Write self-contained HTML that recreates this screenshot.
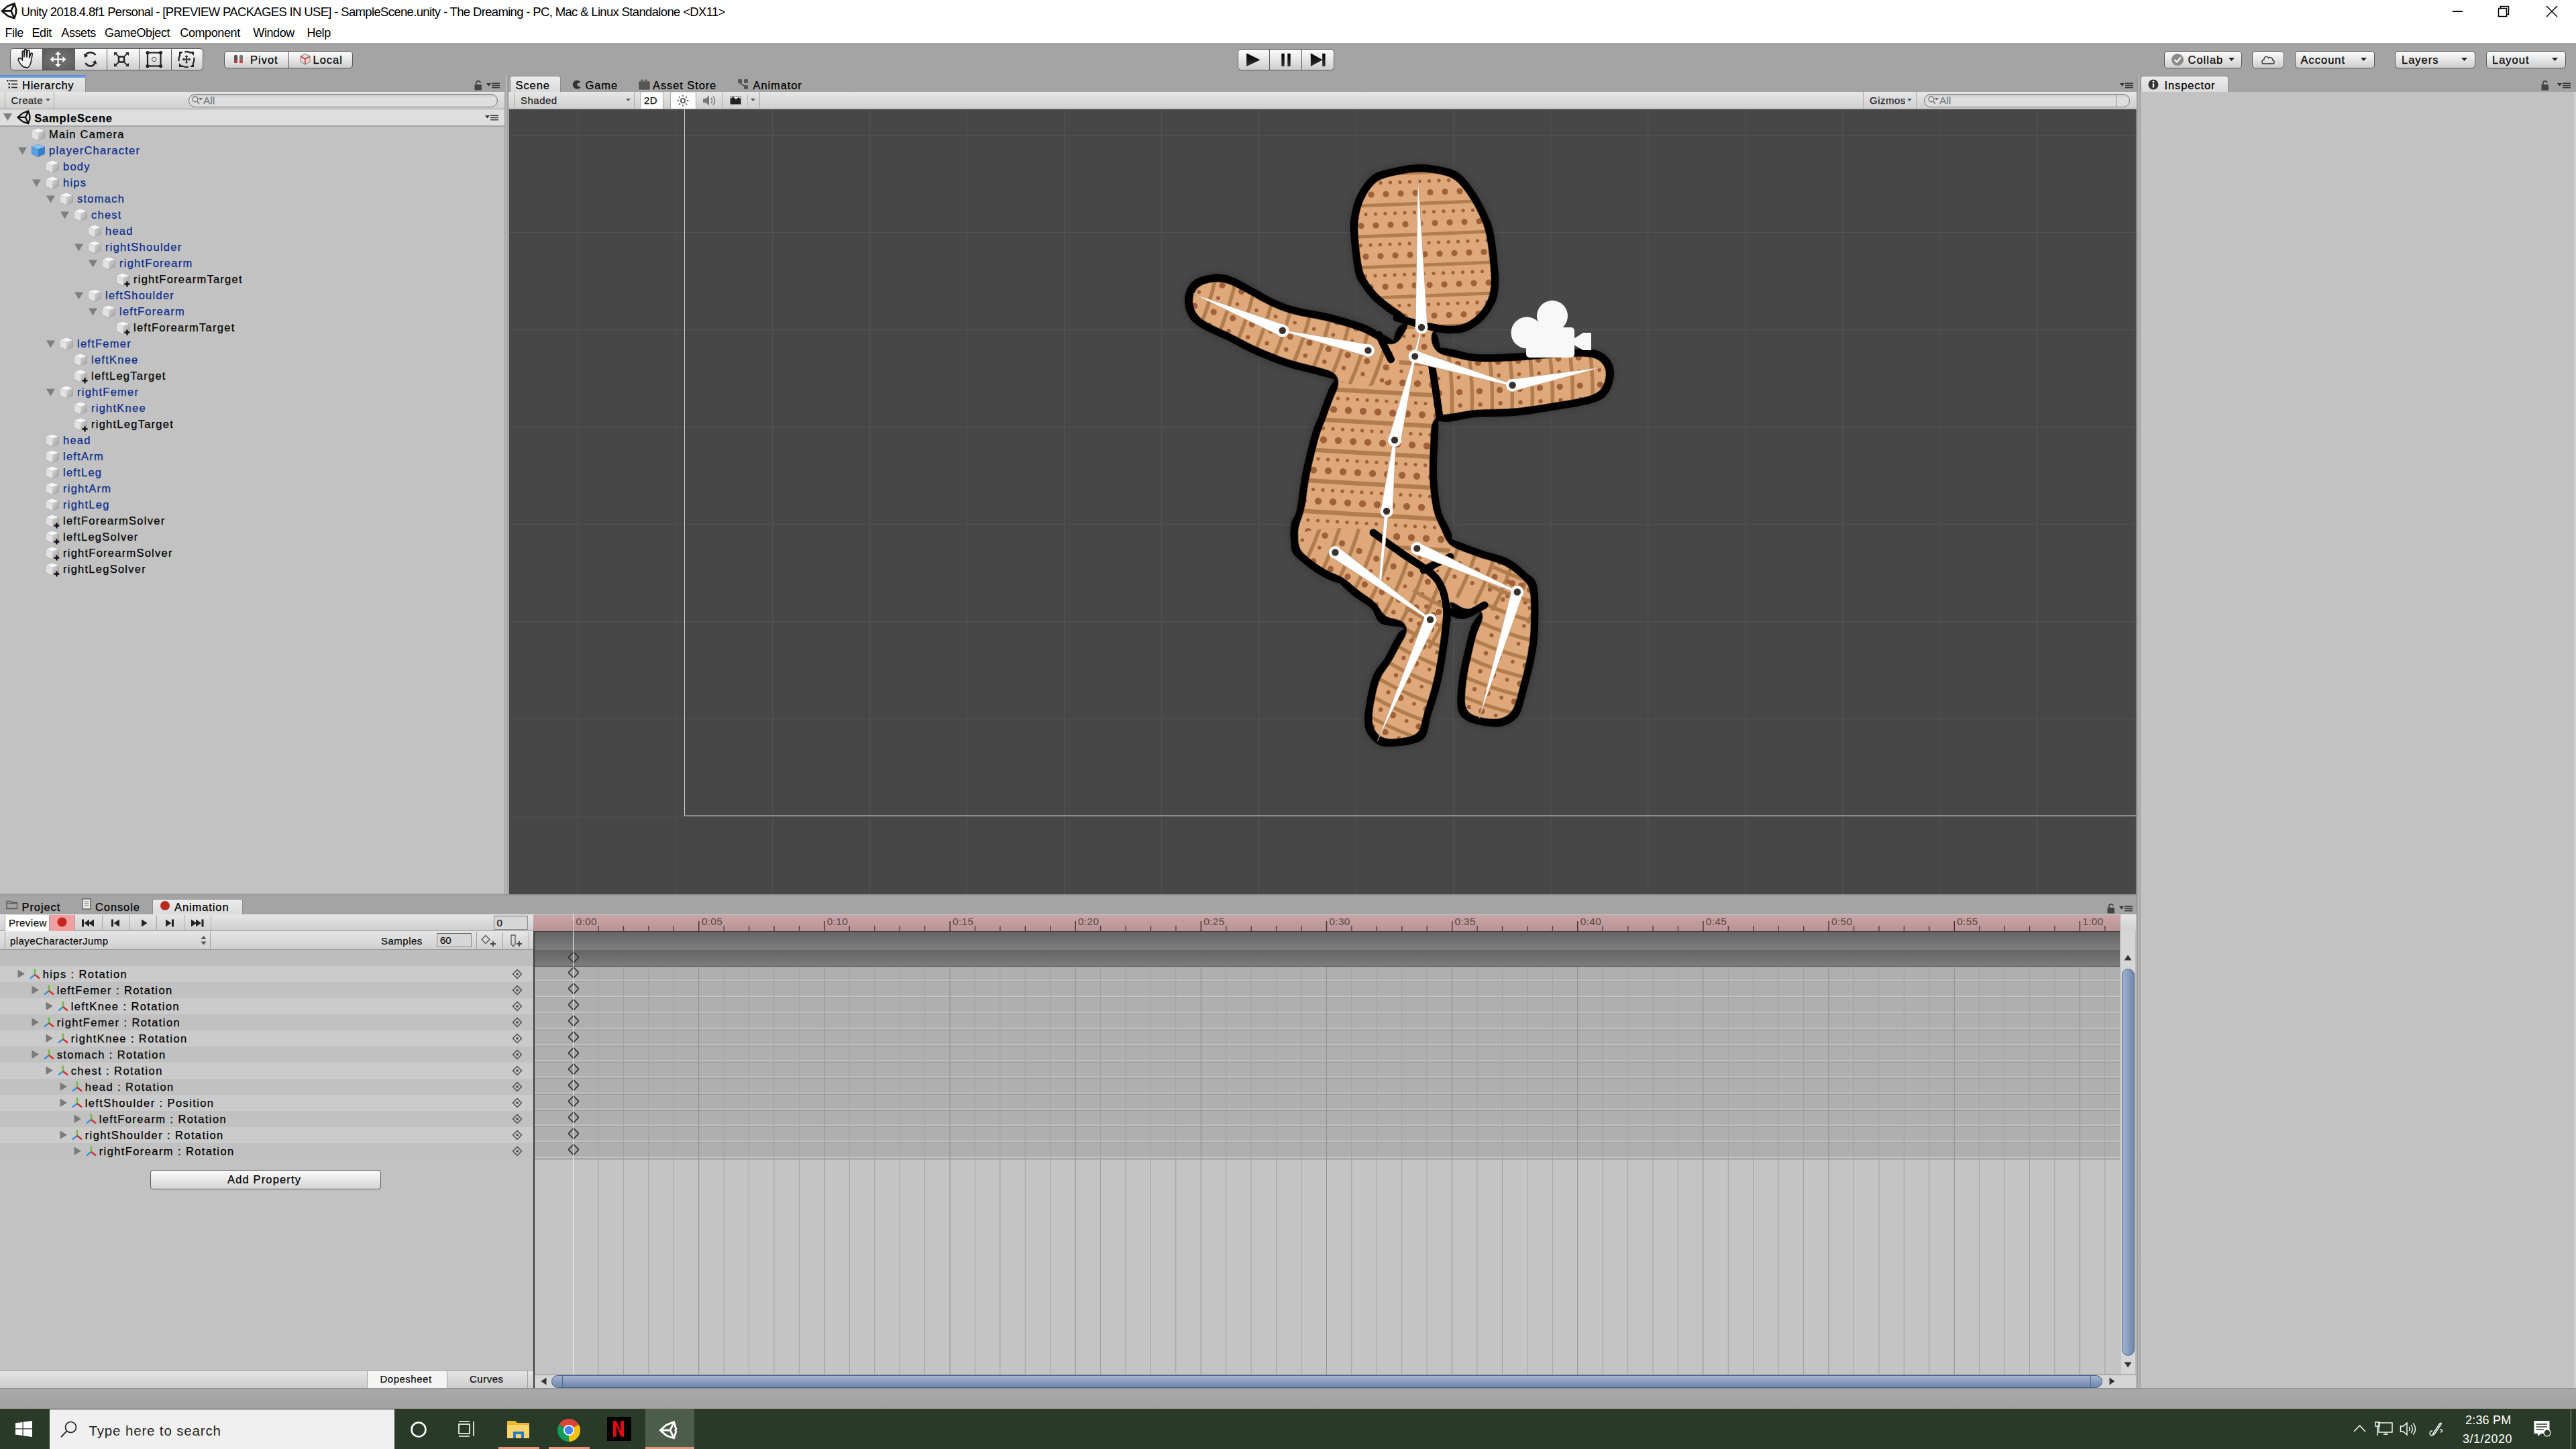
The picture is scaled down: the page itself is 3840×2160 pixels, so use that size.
<!DOCTYPE html><html><head><meta charset="utf-8"><style>
*{margin:0;padding:0;box-sizing:border-box}
html,body{width:3840px;height:2160px;overflow:hidden;background:#c2c2c2;font-family:"Liberation Sans",sans-serif}
body>div,body>svg{position:absolute}
.t{white-space:pre;color:#000;-webkit-text-stroke:0.25px currentColor}
</style></head><body><div style="left:0px;top:0px;width:3840px;height:64px;background:#fff"></div>
<svg style="left:0px;top:0px" width="28.0" height="32.0" viewBox="0 0 28 32"><path d="M3 16.4 L10.5 9.8 L13.5 8.3 L21.4 5.2 L24.3 14.6 L23.4 16.4 L24.3 18.3 L21.4 27.1 L13.5 24.6 L10.5 23 Z M3.5 16.4 H16.4 L21.4 5.6 M16.4 16.4 L21.4 26.7" fill="none" stroke="#111" stroke-width="2.6" stroke-linejoin="miter"/></svg>
<div class="t" style="left:31.5px;top:3.0px;font-size:18.5px;line-height:29px;letter-spacing:-0.66px;color:#000;-webkit-text-stroke:0">Unity 2018.4.8f1 Personal - [PREVIEW PACKAGES IN USE] - SampleScene.unity - The Dreaming - PC, Mac &amp; Linux Standalone &lt;DX11&gt;</div>
<div class="t" style="left:7.5px;top:35.4px;font-size:18px;line-height:28px;letter-spacing:-0.4px;color:#000;-webkit-text-stroke:0">File</div>
<div class="t" style="left:47.5px;top:35.4px;font-size:18px;line-height:28px;letter-spacing:-0.4px;color:#000;-webkit-text-stroke:0">Edit</div>
<div class="t" style="left:91.3px;top:35.4px;font-size:18px;line-height:28px;letter-spacing:-0.4px;color:#000;-webkit-text-stroke:0">Assets</div>
<div class="t" style="left:156.1px;top:35.4px;font-size:18px;line-height:28px;letter-spacing:-0.4px;color:#000;-webkit-text-stroke:0">GameObject</div>
<div class="t" style="left:268.3px;top:35.4px;font-size:18px;line-height:28px;letter-spacing:-0.4px;color:#000;-webkit-text-stroke:0">Component</div>
<div class="t" style="left:377.3px;top:35.4px;font-size:18px;line-height:28px;letter-spacing:-0.4px;color:#000;-webkit-text-stroke:0">Window</div>
<div class="t" style="left:457.4px;top:35.4px;font-size:18px;line-height:28px;letter-spacing:-0.4px;color:#000;-webkit-text-stroke:0">Help</div>
<div style="left:3656px;top:16px;width:15px;height:1.5px;background:#000"></div>
<svg style="left:3722px;top:7px" width="20" height="20"><rect x="2.5" y="5.5" width="12" height="12" fill="none" stroke="#000" stroke-width="1.5"/><path d="M5.5 5.5 V2.5 H17.5 V14.5 H14.5" fill="none" stroke="#000" stroke-width="1.5"/></svg>
<svg style="left:3794px;top:7px" width="20" height="20"><path d="M2 2 L18 18 M18 2 L2 18" stroke="#000" stroke-width="1.5"/></svg>
<div style="left:0px;top:64px;width:3840px;height:73px;background:#a4a4a4"></div>
<div style="left:15px;top:72px;width:49px;height:33px;background:linear-gradient(#fdfdfd,#cdcdcd);border:1.3px solid #5a5a5a;border-top-left-radius:5px;border-bottom-left-radius:5px;"></div>
<div style="left:63px;top:72px;width:48.5px;height:33px;background:radial-gradient(ellipse at center,#7a7a7a,#5a5a5a);border:1px solid #4a4a4a;"></div>
<div style="left:110.5px;top:72px;width:49.0px;height:33px;background:linear-gradient(#fdfdfd,#cdcdcd);border:1.3px solid #5a5a5a;"></div>
<div style="left:158.5px;top:72px;width:49.0px;height:33px;background:linear-gradient(#fdfdfd,#cdcdcd);border:1.3px solid #5a5a5a;"></div>
<div style="left:206.5px;top:72px;width:49.0px;height:33px;background:linear-gradient(#fdfdfd,#cdcdcd);border:1.3px solid #5a5a5a;"></div>
<div style="left:254.5px;top:72px;width:48.0px;height:33px;background:linear-gradient(#fdfdfd,#cdcdcd);border:1.3px solid #5a5a5a;border-top-right-radius:5px;border-bottom-right-radius:5px;"></div>
<svg style="left:15px;top:72px" width="287" height="33" viewBox="0 0 287 33">
<path transform="translate(23.5 16) scale(1.3) translate(-20 -16)" d="M17 25 C13 21 10 17 12 15 C13.5 14 15 16 16 17 L16 8 C16 6.5 18 6.5 18 8 L18 14 L18.5 6 C18.5 4.5 20.8 4.5 20.8 6 L21 14 L22 7 C22 5.5 24.2 5.5 24.2 7 L24 15 L25.5 10 C25.8 8.5 27.8 9 27.5 10.5 L26 19 C25 23 24 25 22 26 Z" fill="#f2f2f2" stroke="#222" stroke-width="1.3"/>
<g fill="#fff" stroke="#333" stroke-width="0.6"><path d="M71.5 4 L77 10 L73 10 L73 15 L78 15 L78 11 L84 16.5 L78 22 L78 18 L73 18 L73 23 L77 23 L71.5 29 L66 23 L70 23 L70 18 L65 18 L65 22 L59 16.5 L65 11 L65 15 L70 15 L70 10 L66 10 Z"/></g>
<g transform="translate(15.5 0)"><path d="M112 10 C108 5 100 5 97 10" fill="none" stroke="#222" stroke-width="2.6"/><path d="M94 8 L96 14 L101 11 Z" fill="#222"/>
<path d="M97 22 C101 28 108 28 111 22" fill="none" stroke="#222" stroke-width="2.6"/><path d="M114 24 L112 18 L107 21 Z" fill="#222"/></g>
<rect x="162" y="12.5" width="8" height="8" fill="none" stroke="#222" stroke-width="2.5"/>
<path d="M157 7.5 L161 11.5 M175 7.5 L171 11.5 M157 25.5 L161 21.5 M175 25.5 L171 21.5" stroke="#222" stroke-width="1.8"/>
<path d="M155 6 H160 L155 11 Z M177 6 H172 L177 11 Z M155 27 H160 L155 22 Z M177 27 H172 L177 22 Z" fill="#222"/>
<rect x="205" y="6.5" width="19.5" height="20" fill="none" stroke="#222" stroke-width="2.2"/>
<circle cx="205" cy="6.5" r="2.6" fill="#222"/><circle cx="224.5" cy="6.5" r="2.6" fill="#222"/><circle cx="205" cy="26.5" r="2.6" fill="#222"/><circle cx="224.5" cy="26.5" r="2.6" fill="#222"/>
<circle cx="214.7" cy="16.5" r="3.2" fill="none" stroke="#444" stroke-width="1"/>
<circle cx="263" cy="16.5" r="11.5" fill="none" stroke="#333" stroke-width="2.4" stroke-dasharray="10 8" stroke-dashoffset="3"/>
<path d="M252 5 H258 L252 11 Z M274 5 H268 L274 11 Z M252 28 H258 L252 22 Z M274 28 H268 L274 22 Z" fill="#222"/>
<path d="M263 10 L265.5 13 H264 V15.5 H266.5 V14 L269.5 16.5 L266.5 19 V17.5 H264 V20 H265.5 L263 23 L260.5 20 H262 V17.5 H259.5 V19 L256.5 16.5 L259.5 14 V15.5 H262 V13 H260.5 Z" fill="#333"/>
</svg>
<div style="left:333.5px;top:75.5px;width:97.0px;height:26.5px;background:linear-gradient(#fdfdfd,#cdcdcd);border:1.3px solid #5a5a5a;border-top-left-radius:5px;border-bottom-left-radius:5px;"></div>
<div style="left:429.5px;top:75.5px;width:96.0px;height:26.5px;background:linear-gradient(#fdfdfd,#cdcdcd);border:1.3px solid #5a5a5a;border-top-right-radius:5px;border-bottom-right-radius:5px;"></div>
<svg style="left:347px;top:79px" width="20" height="18"><rect x="2" y="3" width="5" height="12" rx="1.5" fill="#555"/><rect x="10" y="3" width="5" height="12" rx="1.5" fill="#777"/><circle cx="4.5" cy="12" r="2.2" fill="#e03030"/><circle cx="12.5" cy="13" r="2.2" fill="#e03030"/></svg>
<div class="t" style="left:373px;top:75.5px;font-size:16.5px;line-height:26px;letter-spacing:1.0px;">Pivot</div>
<svg style="left:446px;top:78px" width="18" height="20"><path d="M9 2 L16 6 V14 L9 18 L2 14 V6 Z" fill="#ddd" stroke="#777" stroke-width="1"/><path d="M2 6 L9 10 L16 6 M9 10 V18" fill="none" stroke="#c33" stroke-width="1.5"/></svg>
<div class="t" style="left:466.5px;top:75.5px;font-size:16.5px;line-height:26px;letter-spacing:1.0px;">Local</div>
<div style="left:1845px;top:72.5px;width:48px;height:32.5px;background:linear-gradient(#fdfdfd,#cdcdcd);border:1.3px solid #5a5a5a;border-top-left-radius:5px;border-bottom-left-radius:5px;"></div>
<div style="left:1892px;top:72.5px;width:49px;height:32.5px;background:linear-gradient(#fdfdfd,#cdcdcd);border:1.3px solid #5a5a5a;"></div>
<div style="left:1940px;top:72.5px;width:48.5px;height:32.5px;background:linear-gradient(#fdfdfd,#cdcdcd);border:1.3px solid #5a5a5a;border-top-right-radius:5px;border-bottom-right-radius:5px;"></div>
<svg style="left:1845px;top:72px" width="143" height="33">
<defs><linearGradient id="pg" x1="0" y1="0" x2="0" y2="1"><stop offset="0" stop-color="#000"/><stop offset="1" stop-color="#333"/></linearGradient></defs>
<path d="M13.1 7.3 L33.6 17.2 L13.1 27.1 Z" fill="url(#pg)"/>
<rect x="65.3" y="7.8" width="4.4" height="19" fill="url(#pg)"/><rect x="74.3" y="7.8" width="4.4" height="19" fill="url(#pg)"/>
<path d="M108.8 7.3 L126.5 17.2 L108.8 27.1 Z" fill="url(#pg)"/><rect x="126.2" y="7.8" width="4.4" height="19" fill="url(#pg)"/>
</svg>
<div style="left:3226px;top:75.8px;width:116px;height:26.200000000000003px;background:linear-gradient(#fdfdfd,#cdcdcd);border:1.3px solid #5a5a5a;border-top-left-radius:5px;border-bottom-left-radius:5px;border-top-right-radius:5px;border-bottom-right-radius:5px;"></div>
<svg style="left:3236px;top:79px" width="20" height="20"><circle cx="10" cy="10" r="9" fill="#8a8a8a"/><path d="M5.5 10 L9 13.5 L15 6.5" fill="none" stroke="#fff" stroke-width="2.2"/></svg>
<div class="t" style="left:3261.5px;top:75.5px;font-size:16.5px;line-height:26px;letter-spacing:1.0px;">Collab</div>
<svg style="left:3322px;top:86px" width="10" height="6"><path d="M0 0 H9 L4.5 5 Z" fill="#222"/></svg>
<div style="left:3357px;top:75.8px;width:48px;height:26.200000000000003px;background:linear-gradient(#fdfdfd,#cdcdcd);border:1.3px solid #5a5a5a;border-top-left-radius:5px;border-bottom-left-radius:5px;border-top-right-radius:5px;border-bottom-right-radius:5px;"></div>
<svg style="left:3369px;top:80px" width="24" height="18"><path d="M5 15 H19 C22 15 22 10 19 10 C19 6 15 4 12.5 6.5 C11 3 5.5 4 6 9 C2 9 2 15 5 15 Z" fill="none" stroke="#333" stroke-width="1.3"/></svg>
<div style="left:3420.5px;top:75.8px;width:119.5px;height:26.200000000000003px;background:linear-gradient(#fdfdfd,#cdcdcd);border:1.3px solid #5a5a5a;border-top-left-radius:5px;border-bottom-left-radius:5px;border-top-right-radius:5px;border-bottom-right-radius:5px;"></div>
<div class="t" style="left:3429.5px;top:75.5px;font-size:16.5px;line-height:26px;letter-spacing:1.0px;">Account</div>
<svg style="left:3519px;top:86px" width="10" height="6"><path d="M0 0 H9 L4.5 5 Z" fill="#222"/></svg>
<div style="left:3570px;top:75.8px;width:120px;height:26.200000000000003px;background:linear-gradient(#fdfdfd,#cdcdcd);border:1.3px solid #5a5a5a;border-top-left-radius:5px;border-bottom-left-radius:5px;border-top-right-radius:5px;border-bottom-right-radius:5px;"></div>
<div class="t" style="left:3580px;top:75.5px;font-size:16.5px;line-height:26px;letter-spacing:1.0px;">Layers</div>
<svg style="left:3669px;top:86px" width="10" height="6"><path d="M0 0 H9 L4.5 5 Z" fill="#222"/></svg>
<div style="left:3705.5px;top:75.8px;width:119.5px;height:26.200000000000003px;background:linear-gradient(#fdfdfd,#cdcdcd);border:1.3px solid #5a5a5a;border-top-left-radius:5px;border-bottom-left-radius:5px;border-top-right-radius:5px;border-bottom-right-radius:5px;"></div>
<div class="t" style="left:3715px;top:75.5px;font-size:16.5px;line-height:26px;letter-spacing:1.0px;">Layout</div>
<svg style="left:3804px;top:86px" width="10" height="6"><path d="M0 0 H9 L4.5 5 Z" fill="#222"/></svg>
<div style="left:0px;top:112px;width:128px;height:25px;background:linear-gradient(#eaeaea,#d9d9d9);border-right:1px solid #8c8c8c;"></div>
<div style="left:0px;top:112px;width:128px;height:3.5px;background:linear-gradient(#5a8cd3,#7eaaea)"></div>
<svg style="left:10px;top:119px" width="17" height="14"><rect x="0" y="0" width="2.5" height="2.5" fill="#333"/><rect x="4" y="0.5" width="12" height="1.8" fill="#333"/><rect x="2.5" y="5" width="2.5" height="2.5" fill="#333"/><rect x="7" y="5.5" width="9" height="1.8" fill="#333"/><rect x="2.5" y="10" width="2.5" height="2.5" fill="#333"/><rect x="7" y="10.5" width="9" height="1.8" fill="#333"/></svg>
<div class="t" style="left:33px;top:113.5px;font-size:16.5px;line-height:26px;letter-spacing:0.75px;">Hierarchy</div>
<svg style="left:707px;top:119px" width="12" height="16"><path d="M3 7 V4.5 C3 1 9 1 9 4.5" fill="none" stroke="#444" stroke-width="1.6"/><rect x="0.5" y="7" width="10.5" height="8.5" fill="#444"/></svg>
<svg style="left:725px;top:122px" width="22" height="12"><path d="M0 2 H7 L3.5 6.5 Z" fill="#333"/><rect x="8" y="1.5" width="12" height="1.5" fill="#333"/><rect x="8" y="4.7" width="12" height="1.5" fill="#333"/><rect x="8" y="7.9" width="12" height="1.5" fill="#333"/></svg>
<div style="left:759.5px;top:113px;width:76px;height:24px;background:linear-gradient(#ececec,#dadada);border:1px solid #8c8c8c;border-bottom:none;border-radius:4px 4px 0 0;"></div>
<div class="t" style="left:768.5px;top:113.5px;font-size:16.5px;line-height:26px;letter-spacing:0.9px;">Scene</div>
<svg style="left:852px;top:118px" width="16" height="16"><path d="M13.5 4.5 C11 0.5 4 0.5 2 6 C0.5 11 5 15.5 10 14.5 C12 14 13 13 13.5 12 L8.5 9.5 L8.5 6.5 Z" fill="#333"/></svg>
<div class="t" style="left:872.5px;top:113.5px;font-size:16.5px;line-height:26px;letter-spacing:0.9px;">Game</div>
<svg style="left:952px;top:117px" width="18" height="18"><rect x="1" y="5" width="15" height="11" fill="#555" stroke="#444"/><rect x="3" y="1.5" width="4" height="4" fill="#666"/><rect x="9" y="1.5" width="4" height="4" fill="#666"/></svg>
<div class="t" style="left:973px;top:113.5px;font-size:16.5px;line-height:26px;letter-spacing:0.9px;">Asset Store</div>
<svg style="left:1099px;top:117px" width="18" height="18"><rect x="1" y="1" width="6" height="6" rx="1.5" fill="#555"/><rect x="10" y="1" width="6" height="6" rx="1.5" fill="#555"/><rect x="10" y="10" width="6" height="6" rx="1.5" fill="#555"/><path d="M4 7 L12 12" stroke="#555" stroke-width="2"/></svg>
<div class="t" style="left:1122.5px;top:113.5px;font-size:16.5px;line-height:26px;letter-spacing:0.9px;">Animator</div>
<svg style="left:3160px;top:122px" width="22" height="12"><path d="M0 2 H7 L3.5 6.5 Z" fill="#333"/><rect x="8" y="1.5" width="12" height="1.5" fill="#333"/><rect x="8" y="4.7" width="12" height="1.5" fill="#333"/><rect x="8" y="7.9" width="12" height="1.5" fill="#333"/></svg>
<div style="left:3191px;top:113px;width:131px;height:24px;background:linear-gradient(#ececec,#dadada);border:1px solid #8c8c8c;border-bottom:none;border-radius:4px 4px 0 0;"></div>
<svg style="left:3202px;top:118px" width="16" height="16"><circle cx="8" cy="8" r="7.5" fill="#333"/><rect x="6.8" y="6.5" width="2.4" height="6" fill="#fff"/><circle cx="8" cy="4" r="1.4" fill="#fff"/></svg>
<div class="t" style="left:3226.5px;top:113.5px;font-size:16.5px;line-height:26px;letter-spacing:0.9px;">Inspector</div>
<svg style="left:3788px;top:119px" width="12" height="16"><path d="M3 7 V4.5 C3 1 9 1 9 4.5" fill="none" stroke="#444" stroke-width="1.6"/><rect x="0.5" y="7" width="10.5" height="8.5" fill="#444"/></svg>
<svg style="left:3812px;top:122px" width="22" height="12"><path d="M0 2 H7 L3.5 6.5 Z" fill="#333"/><rect x="8" y="1.5" width="12" height="1.5" fill="#333"/><rect x="8" y="4.7" width="12" height="1.5" fill="#333"/><rect x="8" y="7.9" width="12" height="1.5" fill="#333"/></svg>
<div style="left:0px;top:137px;width:752px;height:1195px;background:#c2c2c2"></div>
<div style="left:0px;top:137px;width:752px;height:25.5px;background:linear-gradient(#e6e6e6,#cfcfcf);border-bottom:1px solid #999;"></div>
<div style="left:7px;top:137px;width:1px;height:25px;background:#a8a8a8"></div>
<div style="left:80px;top:137px;width:1px;height:25px;background:#a8a8a8"></div>
<div class="t" style="left:16.5px;top:138.0px;font-size:15px;line-height:24px;letter-spacing:0.4px;color:#222">Create</div>
<svg style="left:68px;top:147px" width="8" height="5"><path d="M0 0 H7 L3.5 4 Z" fill="#555"/></svg>
<div style="left:280.5px;top:139.5px;width:461px;height:20px;background:linear-gradient(#cfcfcf,#dedede 30%,#dedede);border:1px solid #6f6f6f;border-radius:11px;"></div>
<svg style="left:285px;top:142px" width="20" height="16"><circle cx="6" cy="6" r="4" fill="none" stroke="#777" stroke-width="1.4"/><path d="M9 9 L12 13" stroke="#777" stroke-width="1.6"/><path d="M11 4 H17 L14 7.5 Z" fill="#666"/></svg>
<div class="t" style="left:303px;top:137.5px;font-size:15.5px;line-height:24px;color:#7b7b7b">All</div>
<div style="left:0px;top:162.5px;width:752px;height:26.5px;background:#dedede;border-bottom:2px solid #a3a3a3"></div>
<svg style="left:5px;top:169px" width="15" height="12"><path d="M0 0 H13 L6.5 11 Z" fill="#7f7f7f"/></svg>
<svg style="left:24px;top:161px" width="23.8" height="27.2" viewBox="0 0 28 32"><path d="M3 16.4 L10.5 9.8 L13.5 8.3 L21.4 5.2 L24.3 14.6 L23.4 16.4 L24.3 18.3 L21.4 27.1 L13.5 24.6 L10.5 23 Z M3.5 16.4 H16.4 L21.4 5.6 M16.4 16.4 L21.4 26.7" fill="none" stroke="#111" stroke-width="2.6" stroke-linejoin="miter"/></svg>
<div class="t" style="left:51.2px;top:162.8px;font-size:16.5px;line-height:26px;letter-spacing:0.85px;font-weight:bold">SampleScene</div>
<svg style="left:723px;top:170px" width="22" height="12"><path d="M0 2 H7 L3.5 6.5 Z" fill="#333"/><rect x="8" y="1.5" width="12" height="1.5" fill="#333"/><rect x="8" y="4.7" width="12" height="1.5" fill="#333"/><rect x="8" y="7.9" width="12" height="1.5" fill="#333"/></svg>
<svg width="0" height="0" style="left:0;top:0"><defs><linearGradient id="cg" x1="0" y1="0" x2="1" y2="1"><stop offset="0" stop-color="#d8d8d8"/><stop offset="1" stop-color="#9c9c9c"/></linearGradient></defs></svg>
<svg style="left:46px;top:189.6px" width="22" height="21" viewBox="0 0 22 21"><path d="M11 1 L21 4.5 L21 15.5 L11 20 L1 15.5 L1 4.5 Z" fill="#9a9a9a"/><path d="M1.5 4.8 L11 1.3 L20.5 4.8 L11 8.3 Z" fill="#f4f4f4"/><path d="M1.5 5 L11 8.5 L11 19.5 L1.5 15.2 Z" fill="#e2e2e2"/><path d="M11 8.5 L20.5 5 L20.5 15.2 L11 19.5 Z" fill="url(#cg)"/></svg>
<div class="t" style="left:73px;top:187.1px;font-size:16.5px;line-height:26px;letter-spacing:1.25px;color:#000">Main Camera</div>
<svg style="left:27px;top:218.6px" width="14" height="12"><path d="M0 0.5 H13 L6.5 11.5 Z" fill="#7f7f7f"/></svg>
<svg style="left:46px;top:213.6px" width="22" height="21" viewBox="0 0 22 21"><path d="M11 1 L21 4.5 L21 15.5 L11 20 L1 15.5 L1 4.5 Z" fill="#3a78c0"/><path d="M1.5 4.8 L11 1.3 L20.5 4.8 L11 8.3 Z" fill="#8cc2f0"/><path d="M1.5 5 L11 8.5 L11 19.5 L1.5 15.2 Z" fill="#5a9fe0"/><path d="M11 8.5 L20.5 5 L20.5 15.2 L11 19.5 Z" fill="#3d7dc8"/></svg>
<div class="t" style="left:73px;top:211.1px;font-size:16.5px;line-height:26px;letter-spacing:1.25px;color:#0a2b8c">playerCharacter</div>
<svg style="left:67px;top:237.6px" width="22" height="21" viewBox="0 0 22 21"><path d="M11 1 L21 4.5 L21 15.5 L11 20 L1 15.5 L1 4.5 Z" fill="#9a9a9a"/><path d="M1.5 4.8 L11 1.3 L20.5 4.8 L11 8.3 Z" fill="#f4f4f4"/><path d="M1.5 5 L11 8.5 L11 19.5 L1.5 15.2 Z" fill="#e2e2e2"/><path d="M11 8.5 L20.5 5 L20.5 15.2 L11 19.5 Z" fill="url(#cg)"/></svg>
<div class="t" style="left:94px;top:235.1px;font-size:16.5px;line-height:26px;letter-spacing:1.25px;color:#0a2b8c">body</div>
<svg style="left:48px;top:266.6px" width="14" height="12"><path d="M0 0.5 H13 L6.5 11.5 Z" fill="#7f7f7f"/></svg>
<svg style="left:67px;top:261.6px" width="22" height="21" viewBox="0 0 22 21"><path d="M11 1 L21 4.5 L21 15.5 L11 20 L1 15.5 L1 4.5 Z" fill="#9a9a9a"/><path d="M1.5 4.8 L11 1.3 L20.5 4.8 L11 8.3 Z" fill="#f4f4f4"/><path d="M1.5 5 L11 8.5 L11 19.5 L1.5 15.2 Z" fill="#e2e2e2"/><path d="M11 8.5 L20.5 5 L20.5 15.2 L11 19.5 Z" fill="url(#cg)"/></svg>
<div class="t" style="left:94px;top:259.1px;font-size:16.5px;line-height:26px;letter-spacing:1.25px;color:#0a2b8c">hips</div>
<svg style="left:69px;top:290.6px" width="14" height="12"><path d="M0 0.5 H13 L6.5 11.5 Z" fill="#7f7f7f"/></svg>
<svg style="left:88px;top:285.6px" width="22" height="21" viewBox="0 0 22 21"><path d="M11 1 L21 4.5 L21 15.5 L11 20 L1 15.5 L1 4.5 Z" fill="#9a9a9a"/><path d="M1.5 4.8 L11 1.3 L20.5 4.8 L11 8.3 Z" fill="#f4f4f4"/><path d="M1.5 5 L11 8.5 L11 19.5 L1.5 15.2 Z" fill="#e2e2e2"/><path d="M11 8.5 L20.5 5 L20.5 15.2 L11 19.5 Z" fill="url(#cg)"/></svg>
<div class="t" style="left:115px;top:283.1px;font-size:16.5px;line-height:26px;letter-spacing:1.25px;color:#0a2b8c">stomach</div>
<svg style="left:90px;top:314.6px" width="14" height="12"><path d="M0 0.5 H13 L6.5 11.5 Z" fill="#7f7f7f"/></svg>
<svg style="left:109px;top:309.6px" width="22" height="21" viewBox="0 0 22 21"><path d="M11 1 L21 4.5 L21 15.5 L11 20 L1 15.5 L1 4.5 Z" fill="#9a9a9a"/><path d="M1.5 4.8 L11 1.3 L20.5 4.8 L11 8.3 Z" fill="#f4f4f4"/><path d="M1.5 5 L11 8.5 L11 19.5 L1.5 15.2 Z" fill="#e2e2e2"/><path d="M11 8.5 L20.5 5 L20.5 15.2 L11 19.5 Z" fill="url(#cg)"/></svg>
<div class="t" style="left:136px;top:307.1px;font-size:16.5px;line-height:26px;letter-spacing:1.25px;color:#0a2b8c">chest</div>
<svg style="left:130px;top:333.6px" width="22" height="21" viewBox="0 0 22 21"><path d="M11 1 L21 4.5 L21 15.5 L11 20 L1 15.5 L1 4.5 Z" fill="#9a9a9a"/><path d="M1.5 4.8 L11 1.3 L20.5 4.8 L11 8.3 Z" fill="#f4f4f4"/><path d="M1.5 5 L11 8.5 L11 19.5 L1.5 15.2 Z" fill="#e2e2e2"/><path d="M11 8.5 L20.5 5 L20.5 15.2 L11 19.5 Z" fill="url(#cg)"/></svg>
<div class="t" style="left:157px;top:331.1px;font-size:16.5px;line-height:26px;letter-spacing:1.25px;color:#0a2b8c">head</div>
<svg style="left:111px;top:362.6px" width="14" height="12"><path d="M0 0.5 H13 L6.5 11.5 Z" fill="#7f7f7f"/></svg>
<svg style="left:130px;top:357.6px" width="22" height="21" viewBox="0 0 22 21"><path d="M11 1 L21 4.5 L21 15.5 L11 20 L1 15.5 L1 4.5 Z" fill="#9a9a9a"/><path d="M1.5 4.8 L11 1.3 L20.5 4.8 L11 8.3 Z" fill="#f4f4f4"/><path d="M1.5 5 L11 8.5 L11 19.5 L1.5 15.2 Z" fill="#e2e2e2"/><path d="M11 8.5 L20.5 5 L20.5 15.2 L11 19.5 Z" fill="url(#cg)"/></svg>
<div class="t" style="left:157px;top:355.1px;font-size:16.5px;line-height:26px;letter-spacing:1.25px;color:#0a2b8c">rightShoulder</div>
<svg style="left:132px;top:386.6px" width="14" height="12"><path d="M0 0.5 H13 L6.5 11.5 Z" fill="#7f7f7f"/></svg>
<svg style="left:151px;top:381.6px" width="22" height="21" viewBox="0 0 22 21"><path d="M11 1 L21 4.5 L21 15.5 L11 20 L1 15.5 L1 4.5 Z" fill="#9a9a9a"/><path d="M1.5 4.8 L11 1.3 L20.5 4.8 L11 8.3 Z" fill="#f4f4f4"/><path d="M1.5 5 L11 8.5 L11 19.5 L1.5 15.2 Z" fill="#e2e2e2"/><path d="M11 8.5 L20.5 5 L20.5 15.2 L11 19.5 Z" fill="url(#cg)"/></svg>
<div class="t" style="left:178px;top:379.1px;font-size:16.5px;line-height:26px;letter-spacing:1.25px;color:#0a2b8c">rightForearm</div>
<svg style="left:172px;top:405.6px" width="22" height="21" viewBox="0 0 22 21"><path d="M11 1 L21 4.5 L21 15.5 L11 20 L1 15.5 L1 4.5 Z" fill="#9a9a9a"/><path d="M1.5 4.8 L11 1.3 L20.5 4.8 L11 8.3 Z" fill="#f4f4f4"/><path d="M1.5 5 L11 8.5 L11 19.5 L1.5 15.2 Z" fill="#e2e2e2"/><path d="M11 8.5 L20.5 5 L20.5 15.2 L11 19.5 Z" fill="url(#cg)"/></svg>
<svg style="left:185px;top:419.1px" width="9" height="9"><path d="M4.5 0.5 V8.5 M0.5 4.5 H8.5" stroke="#111" stroke-width="2.4"/></svg>
<div class="t" style="left:199px;top:403.1px;font-size:16.5px;line-height:26px;letter-spacing:1.25px;color:#000">rightForearmTarget</div>
<svg style="left:111px;top:434.6px" width="14" height="12"><path d="M0 0.5 H13 L6.5 11.5 Z" fill="#7f7f7f"/></svg>
<svg style="left:130px;top:429.6px" width="22" height="21" viewBox="0 0 22 21"><path d="M11 1 L21 4.5 L21 15.5 L11 20 L1 15.5 L1 4.5 Z" fill="#9a9a9a"/><path d="M1.5 4.8 L11 1.3 L20.5 4.8 L11 8.3 Z" fill="#f4f4f4"/><path d="M1.5 5 L11 8.5 L11 19.5 L1.5 15.2 Z" fill="#e2e2e2"/><path d="M11 8.5 L20.5 5 L20.5 15.2 L11 19.5 Z" fill="url(#cg)"/></svg>
<div class="t" style="left:157px;top:427.1px;font-size:16.5px;line-height:26px;letter-spacing:1.25px;color:#0a2b8c">leftShoulder</div>
<svg style="left:132px;top:458.6px" width="14" height="12"><path d="M0 0.5 H13 L6.5 11.5 Z" fill="#7f7f7f"/></svg>
<svg style="left:151px;top:453.6px" width="22" height="21" viewBox="0 0 22 21"><path d="M11 1 L21 4.5 L21 15.5 L11 20 L1 15.5 L1 4.5 Z" fill="#9a9a9a"/><path d="M1.5 4.8 L11 1.3 L20.5 4.8 L11 8.3 Z" fill="#f4f4f4"/><path d="M1.5 5 L11 8.5 L11 19.5 L1.5 15.2 Z" fill="#e2e2e2"/><path d="M11 8.5 L20.5 5 L20.5 15.2 L11 19.5 Z" fill="url(#cg)"/></svg>
<div class="t" style="left:178px;top:451.1px;font-size:16.5px;line-height:26px;letter-spacing:1.25px;color:#0a2b8c">leftForearm</div>
<svg style="left:172px;top:477.6px" width="22" height="21" viewBox="0 0 22 21"><path d="M11 1 L21 4.5 L21 15.5 L11 20 L1 15.5 L1 4.5 Z" fill="#9a9a9a"/><path d="M1.5 4.8 L11 1.3 L20.5 4.8 L11 8.3 Z" fill="#f4f4f4"/><path d="M1.5 5 L11 8.5 L11 19.5 L1.5 15.2 Z" fill="#e2e2e2"/><path d="M11 8.5 L20.5 5 L20.5 15.2 L11 19.5 Z" fill="url(#cg)"/></svg>
<svg style="left:185px;top:491.1px" width="9" height="9"><path d="M4.5 0.5 V8.5 M0.5 4.5 H8.5" stroke="#111" stroke-width="2.4"/></svg>
<div class="t" style="left:199px;top:475.1px;font-size:16.5px;line-height:26px;letter-spacing:1.25px;color:#000">leftForearmTarget</div>
<svg style="left:69px;top:506.6px" width="14" height="12"><path d="M0 0.5 H13 L6.5 11.5 Z" fill="#7f7f7f"/></svg>
<svg style="left:88px;top:501.6px" width="22" height="21" viewBox="0 0 22 21"><path d="M11 1 L21 4.5 L21 15.5 L11 20 L1 15.5 L1 4.5 Z" fill="#9a9a9a"/><path d="M1.5 4.8 L11 1.3 L20.5 4.8 L11 8.3 Z" fill="#f4f4f4"/><path d="M1.5 5 L11 8.5 L11 19.5 L1.5 15.2 Z" fill="#e2e2e2"/><path d="M11 8.5 L20.5 5 L20.5 15.2 L11 19.5 Z" fill="url(#cg)"/></svg>
<div class="t" style="left:115px;top:499.1px;font-size:16.5px;line-height:26px;letter-spacing:1.25px;color:#0a2b8c">leftFemer</div>
<svg style="left:109px;top:525.6px" width="22" height="21" viewBox="0 0 22 21"><path d="M11 1 L21 4.5 L21 15.5 L11 20 L1 15.5 L1 4.5 Z" fill="#9a9a9a"/><path d="M1.5 4.8 L11 1.3 L20.5 4.8 L11 8.3 Z" fill="#f4f4f4"/><path d="M1.5 5 L11 8.5 L11 19.5 L1.5 15.2 Z" fill="#e2e2e2"/><path d="M11 8.5 L20.5 5 L20.5 15.2 L11 19.5 Z" fill="url(#cg)"/></svg>
<div class="t" style="left:136px;top:523.1px;font-size:16.5px;line-height:26px;letter-spacing:1.25px;color:#0a2b8c">leftKnee</div>
<svg style="left:109px;top:549.6px" width="22" height="21" viewBox="0 0 22 21"><path d="M11 1 L21 4.5 L21 15.5 L11 20 L1 15.5 L1 4.5 Z" fill="#9a9a9a"/><path d="M1.5 4.8 L11 1.3 L20.5 4.8 L11 8.3 Z" fill="#f4f4f4"/><path d="M1.5 5 L11 8.5 L11 19.5 L1.5 15.2 Z" fill="#e2e2e2"/><path d="M11 8.5 L20.5 5 L20.5 15.2 L11 19.5 Z" fill="url(#cg)"/></svg>
<svg style="left:122px;top:563.1px" width="9" height="9"><path d="M4.5 0.5 V8.5 M0.5 4.5 H8.5" stroke="#111" stroke-width="2.4"/></svg>
<div class="t" style="left:136px;top:547.1px;font-size:16.5px;line-height:26px;letter-spacing:1.25px;color:#000">leftLegTarget</div>
<svg style="left:69px;top:578.6px" width="14" height="12"><path d="M0 0.5 H13 L6.5 11.5 Z" fill="#7f7f7f"/></svg>
<svg style="left:88px;top:573.6px" width="22" height="21" viewBox="0 0 22 21"><path d="M11 1 L21 4.5 L21 15.5 L11 20 L1 15.5 L1 4.5 Z" fill="#9a9a9a"/><path d="M1.5 4.8 L11 1.3 L20.5 4.8 L11 8.3 Z" fill="#f4f4f4"/><path d="M1.5 5 L11 8.5 L11 19.5 L1.5 15.2 Z" fill="#e2e2e2"/><path d="M11 8.5 L20.5 5 L20.5 15.2 L11 19.5 Z" fill="url(#cg)"/></svg>
<div class="t" style="left:115px;top:571.1px;font-size:16.5px;line-height:26px;letter-spacing:1.25px;color:#0a2b8c">rightFemer</div>
<svg style="left:109px;top:597.6px" width="22" height="21" viewBox="0 0 22 21"><path d="M11 1 L21 4.5 L21 15.5 L11 20 L1 15.5 L1 4.5 Z" fill="#9a9a9a"/><path d="M1.5 4.8 L11 1.3 L20.5 4.8 L11 8.3 Z" fill="#f4f4f4"/><path d="M1.5 5 L11 8.5 L11 19.5 L1.5 15.2 Z" fill="#e2e2e2"/><path d="M11 8.5 L20.5 5 L20.5 15.2 L11 19.5 Z" fill="url(#cg)"/></svg>
<div class="t" style="left:136px;top:595.1px;font-size:16.5px;line-height:26px;letter-spacing:1.25px;color:#0a2b8c">rightKnee</div>
<svg style="left:109px;top:621.6px" width="22" height="21" viewBox="0 0 22 21"><path d="M11 1 L21 4.5 L21 15.5 L11 20 L1 15.5 L1 4.5 Z" fill="#9a9a9a"/><path d="M1.5 4.8 L11 1.3 L20.5 4.8 L11 8.3 Z" fill="#f4f4f4"/><path d="M1.5 5 L11 8.5 L11 19.5 L1.5 15.2 Z" fill="#e2e2e2"/><path d="M11 8.5 L20.5 5 L20.5 15.2 L11 19.5 Z" fill="url(#cg)"/></svg>
<svg style="left:122px;top:635.1px" width="9" height="9"><path d="M4.5 0.5 V8.5 M0.5 4.5 H8.5" stroke="#111" stroke-width="2.4"/></svg>
<div class="t" style="left:136px;top:619.1px;font-size:16.5px;line-height:26px;letter-spacing:1.25px;color:#000">rightLegTarget</div>
<svg style="left:67px;top:645.6px" width="22" height="21" viewBox="0 0 22 21"><path d="M11 1 L21 4.5 L21 15.5 L11 20 L1 15.5 L1 4.5 Z" fill="#9a9a9a"/><path d="M1.5 4.8 L11 1.3 L20.5 4.8 L11 8.3 Z" fill="#f4f4f4"/><path d="M1.5 5 L11 8.5 L11 19.5 L1.5 15.2 Z" fill="#e2e2e2"/><path d="M11 8.5 L20.5 5 L20.5 15.2 L11 19.5 Z" fill="url(#cg)"/></svg>
<div class="t" style="left:94px;top:643.1px;font-size:16.5px;line-height:26px;letter-spacing:1.25px;color:#0a2b8c">head</div>
<svg style="left:67px;top:669.6px" width="22" height="21" viewBox="0 0 22 21"><path d="M11 1 L21 4.5 L21 15.5 L11 20 L1 15.5 L1 4.5 Z" fill="#9a9a9a"/><path d="M1.5 4.8 L11 1.3 L20.5 4.8 L11 8.3 Z" fill="#f4f4f4"/><path d="M1.5 5 L11 8.5 L11 19.5 L1.5 15.2 Z" fill="#e2e2e2"/><path d="M11 8.5 L20.5 5 L20.5 15.2 L11 19.5 Z" fill="url(#cg)"/></svg>
<div class="t" style="left:94px;top:667.1px;font-size:16.5px;line-height:26px;letter-spacing:1.25px;color:#0a2b8c">leftArm</div>
<svg style="left:67px;top:693.6px" width="22" height="21" viewBox="0 0 22 21"><path d="M11 1 L21 4.5 L21 15.5 L11 20 L1 15.5 L1 4.5 Z" fill="#9a9a9a"/><path d="M1.5 4.8 L11 1.3 L20.5 4.8 L11 8.3 Z" fill="#f4f4f4"/><path d="M1.5 5 L11 8.5 L11 19.5 L1.5 15.2 Z" fill="#e2e2e2"/><path d="M11 8.5 L20.5 5 L20.5 15.2 L11 19.5 Z" fill="url(#cg)"/></svg>
<div class="t" style="left:94px;top:691.1px;font-size:16.5px;line-height:26px;letter-spacing:1.25px;color:#0a2b8c">leftLeg</div>
<svg style="left:67px;top:717.6px" width="22" height="21" viewBox="0 0 22 21"><path d="M11 1 L21 4.5 L21 15.5 L11 20 L1 15.5 L1 4.5 Z" fill="#9a9a9a"/><path d="M1.5 4.8 L11 1.3 L20.5 4.8 L11 8.3 Z" fill="#f4f4f4"/><path d="M1.5 5 L11 8.5 L11 19.5 L1.5 15.2 Z" fill="#e2e2e2"/><path d="M11 8.5 L20.5 5 L20.5 15.2 L11 19.5 Z" fill="url(#cg)"/></svg>
<div class="t" style="left:94px;top:715.1px;font-size:16.5px;line-height:26px;letter-spacing:1.25px;color:#0a2b8c">rightArm</div>
<svg style="left:67px;top:741.6px" width="22" height="21" viewBox="0 0 22 21"><path d="M11 1 L21 4.5 L21 15.5 L11 20 L1 15.5 L1 4.5 Z" fill="#9a9a9a"/><path d="M1.5 4.8 L11 1.3 L20.5 4.8 L11 8.3 Z" fill="#f4f4f4"/><path d="M1.5 5 L11 8.5 L11 19.5 L1.5 15.2 Z" fill="#e2e2e2"/><path d="M11 8.5 L20.5 5 L20.5 15.2 L11 19.5 Z" fill="url(#cg)"/></svg>
<div class="t" style="left:94px;top:739.1px;font-size:16.5px;line-height:26px;letter-spacing:1.25px;color:#0a2b8c">rightLeg</div>
<svg style="left:67px;top:765.6px" width="22" height="21" viewBox="0 0 22 21"><path d="M11 1 L21 4.5 L21 15.5 L11 20 L1 15.5 L1 4.5 Z" fill="#9a9a9a"/><path d="M1.5 4.8 L11 1.3 L20.5 4.8 L11 8.3 Z" fill="#f4f4f4"/><path d="M1.5 5 L11 8.5 L11 19.5 L1.5 15.2 Z" fill="#e2e2e2"/><path d="M11 8.5 L20.5 5 L20.5 15.2 L11 19.5 Z" fill="url(#cg)"/></svg>
<svg style="left:80px;top:779.1px" width="9" height="9"><path d="M4.5 0.5 V8.5 M0.5 4.5 H8.5" stroke="#111" stroke-width="2.4"/></svg>
<div class="t" style="left:94px;top:763.1px;font-size:16.5px;line-height:26px;letter-spacing:1.25px;color:#000">leftForearmSolver</div>
<svg style="left:67px;top:789.6px" width="22" height="21" viewBox="0 0 22 21"><path d="M11 1 L21 4.5 L21 15.5 L11 20 L1 15.5 L1 4.5 Z" fill="#9a9a9a"/><path d="M1.5 4.8 L11 1.3 L20.5 4.8 L11 8.3 Z" fill="#f4f4f4"/><path d="M1.5 5 L11 8.5 L11 19.5 L1.5 15.2 Z" fill="#e2e2e2"/><path d="M11 8.5 L20.5 5 L20.5 15.2 L11 19.5 Z" fill="url(#cg)"/></svg>
<svg style="left:80px;top:803.1px" width="9" height="9"><path d="M4.5 0.5 V8.5 M0.5 4.5 H8.5" stroke="#111" stroke-width="2.4"/></svg>
<div class="t" style="left:94px;top:787.1px;font-size:16.5px;line-height:26px;letter-spacing:1.25px;color:#000">leftLegSolver</div>
<svg style="left:67px;top:813.6px" width="22" height="21" viewBox="0 0 22 21"><path d="M11 1 L21 4.5 L21 15.5 L11 20 L1 15.5 L1 4.5 Z" fill="#9a9a9a"/><path d="M1.5 4.8 L11 1.3 L20.5 4.8 L11 8.3 Z" fill="#f4f4f4"/><path d="M1.5 5 L11 8.5 L11 19.5 L1.5 15.2 Z" fill="#e2e2e2"/><path d="M11 8.5 L20.5 5 L20.5 15.2 L11 19.5 Z" fill="url(#cg)"/></svg>
<svg style="left:80px;top:827.1px" width="9" height="9"><path d="M4.5 0.5 V8.5 M0.5 4.5 H8.5" stroke="#111" stroke-width="2.4"/></svg>
<div class="t" style="left:94px;top:811.1px;font-size:16.5px;line-height:26px;letter-spacing:1.25px;color:#000">rightForearmSolver</div>
<svg style="left:67px;top:837.6px" width="22" height="21" viewBox="0 0 22 21"><path d="M11 1 L21 4.5 L21 15.5 L11 20 L1 15.5 L1 4.5 Z" fill="#9a9a9a"/><path d="M1.5 4.8 L11 1.3 L20.5 4.8 L11 8.3 Z" fill="#f4f4f4"/><path d="M1.5 5 L11 8.5 L11 19.5 L1.5 15.2 Z" fill="#e2e2e2"/><path d="M11 8.5 L20.5 5 L20.5 15.2 L11 19.5 Z" fill="url(#cg)"/></svg>
<svg style="left:80px;top:851.1px" width="9" height="9"><path d="M4.5 0.5 V8.5 M0.5 4.5 H8.5" stroke="#111" stroke-width="2.4"/></svg>
<div class="t" style="left:94px;top:835.1px;font-size:16.5px;line-height:26px;letter-spacing:1.25px;color:#000">rightLegSolver</div>
<div style="left:751.5px;top:112px;width:6.5px;height:1221px;background:linear-gradient(90deg,#9a9a9a,#bdbdbd 45%,#8a8a8a)"></div>
<div style="left:3184.5px;top:112px;width:6.5px;height:1957px;background:linear-gradient(90deg,#8a8a8a,#b8b8b8 50%,#9a9a9a)"></div>
<div style="left:758px;top:137px;width:2426.5px;height:25.5px;background:linear-gradient(#e6e6e6,#cfcfcf);border-bottom:1px solid #999;"></div>
<div style="left:766px;top:137px;width:1px;height:25px;background:#a8a8a8"></div>
<div class="t" style="left:776px;top:138.0px;font-size:15px;line-height:24px;letter-spacing:0.5px;color:#222">Shaded</div>
<svg style="left:933px;top:147px" width="8" height="5"><path d="M0 0 H7 L3.5 4 Z" fill="#555"/></svg>
<div style="left:945px;top:137px;width:1px;height:25px;background:#a8a8a8"></div>
<div style="left:954px;top:137px;width:1px;height:25px;background:#b0b0b0"></div>
<div style="left:955px;top:138px;width:33px;height:23.5px;background:#fdfdfd"></div>
<div class="t" style="left:960px;top:138.0px;font-size:15px;line-height:24px;letter-spacing:0.5px;color:#111">2D</div>
<div style="left:988px;top:137px;width:1px;height:25px;background:#a8a8a8"></div>
<div style="left:999px;top:137px;width:1px;height:25px;background:#a8a8a8"></div>
<div style="left:1000px;top:138px;width:37px;height:23.5px;background:#fdfdfd"></div>
<svg style="left:1008px;top:140px" width="20" height="20"><circle cx="10" cy="10" r="3.2" fill="none" stroke="#444" stroke-width="1.6"/><path d="M10 1.5 V4 M10 16 V18.5 M1.5 10 H4 M16 10 H18.5 M4 4 L5.7 5.7 M14.3 14.3 L16 16 M16 4 L14.3 5.7 M5.7 14.3 L4 16" stroke="#444" stroke-width="1.5"/></svg>
<div style="left:1037px;top:137px;width:1px;height:25px;background:#a8a8a8"></div>
<svg style="left:1046px;top:140px" width="24" height="20"><path d="M2 7 H6 L11 2.5 V17.5 L6 13 H2 Z" fill="#777"/><path d="M14 6 C16 8 16 12 14 14 M17 3.5 C20.5 7 20.5 13 17 16.5" fill="none" stroke="#777" stroke-width="1.5"/></svg>
<div style="left:1076px;top:137px;width:1px;height:25px;background:#a8a8a8"></div>
<svg style="left:1088px;top:143px" width="18" height="14"><rect x="0.5" y="0.5" width="16" height="12" fill="#222"/><path d="M1.5 11.5 L5 5 L8 8.5 L11 3.5 L15.5 9 V11.5 Z" fill="#fff" opacity="0"/><path d="M1 4 L5 1 L9 5 L13 2 L16 4 V1 H1 Z" fill="#fff"/></svg>
<div style="left:1114px;top:141px;width:1px;height:17px;background:#b8b8b8"></div>
<svg style="left:1119px;top:147px" width="8" height="5"><path d="M0 0 H7 L3.5 4 Z" fill="#555"/></svg>
<div style="left:1132px;top:137px;width:1px;height:25px;background:#a8a8a8"></div>
<div style="left:2777px;top:137px;width:1px;height:25px;background:#a8a8a8"></div>
<div class="t" style="left:2787px;top:138.0px;font-size:15px;line-height:24px;letter-spacing:0.5px;color:#222">Gizmos</div>
<svg style="left:2843px;top:147px" width="8" height="5"><path d="M0 0 H7 L3.5 4 Z" fill="#555"/></svg>
<div style="left:2856px;top:137px;width:1px;height:25px;background:#a8a8a8"></div>
<div style="left:2868px;top:139.5px;width:307px;height:20px;background:linear-gradient(#cfcfcf,#dedede 30%,#dedede);border:1px solid #6f6f6f;border-radius:11px;"></div>
<svg style="left:2873px;top:142px" width="20" height="16"><circle cx="6" cy="6" r="4" fill="none" stroke="#777" stroke-width="1.4"/><path d="M9 9 L12 13" stroke="#777" stroke-width="1.6"/><path d="M11 4 H17 L14 7.5 Z" fill="#666"/></svg>
<div class="t" style="left:2891px;top:137.5px;font-size:15.5px;line-height:24px;color:#7b7b7b">All</div>
<div style="left:3154px;top:140px;width:1px;height:19px;background:#8a8a8a"></div>
<svg style="left:759px;top:162.5px" width="2425.5" height="1170.0"><rect width="100%" height="100%" fill="#474747"/><rect x="102.0" y="0" width="1" height="1170.0" fill="#555"/><rect x="247.0" y="0" width="1" height="1170.0" fill="#555"/><rect x="392.1" y="0" width="1" height="1170.0" fill="#555"/><rect x="537.1" y="0" width="1" height="1170.0" fill="#555"/><rect x="682.1" y="0" width="1" height="1170.0" fill="#555"/><rect x="827.1" y="0" width="1" height="1170.0" fill="#555"/><rect x="972.2" y="0" width="1" height="1170.0" fill="#555"/><rect x="1117.2" y="0" width="1" height="1170.0" fill="#555"/><rect x="1262.2" y="0" width="1" height="1170.0" fill="#555"/><rect x="1407.3" y="0" width="1" height="1170.0" fill="#555"/><rect x="1552.3" y="0" width="1" height="1170.0" fill="#555"/><rect x="1697.3" y="0" width="1" height="1170.0" fill="#555"/><rect x="1842.4" y="0" width="1" height="1170.0" fill="#555"/><rect x="1987.4" y="0" width="1" height="1170.0" fill="#555"/><rect x="2132.4" y="0" width="1" height="1170.0" fill="#555"/><rect x="2277.5" y="0" width="1" height="1170.0" fill="#555"/><rect x="2422.5" y="0" width="1" height="1170.0" fill="#555"/><rect x="0" y="38.1" width="2425.5" height="1" fill="#555"/><rect x="0" y="183.1" width="2425.5" height="1" fill="#555"/><rect x="0" y="328.2" width="2425.5" height="1" fill="#555"/><rect x="0" y="473.2" width="2425.5" height="1" fill="#555"/><rect x="0" y="618.2" width="2425.5" height="1" fill="#555"/><rect x="0" y="763.2" width="2425.5" height="1" fill="#555"/><rect x="0" y="908.3" width="2425.5" height="1" fill="#555"/><rect x="0" y="1053.3" width="2425.5" height="1" fill="#555"/><path d="M261.5 0 V1053.0 H2425.5" fill="none" stroke="#cfcfcf" stroke-width="1"/></svg>
<svg style="left:1700px;top:200px" width="800" height="950" viewBox="0 0 800 950">
<defs><filter id="er" x="-5%" y="-5%" width="110%" height="110%"><feGaussianBlur stdDeviation="9"/><feComponentTransfer><feFuncA type="linear" slope="30" intercept="-26.5"/></feComponentTransfer></filter>
<filter id="sh" x="-5%" y="-5%" width="110%" height="110%"><feGaussianBlur stdDeviation="5"/></filter>
<mask id="bm" maskUnits="userSpaceOnUse" x="0" y="0" width="800" height="950"><g fill="#fff" filter="url(#er)"><path d="M436.0 323.0 C447.7 311.0 480.2 327.3 500.0 328.0 C519.8 328.7 535.0 328.0 555.0 327.0 C575.0 326.0 600.3 323.0 620.0 322.0 C639.7 321.0 660.2 319.2 673.0 321.0 C685.8 322.8 691.5 327.2 697.0 333.0 C702.5 338.8 706.0 347.2 706.0 356.0 C706.0 364.8 702.5 378.5 697.0 386.0 C691.5 393.5 686.8 396.7 673.0 401.0 C659.2 405.3 633.3 408.8 614.0 412.0 C594.7 415.2 576.0 418.3 557.0 420.0 C538.0 421.7 518.2 420.7 500.0 422.0 C481.8 423.3 459.7 431.7 448.0 428.0 C436.3 424.3 432.0 417.5 430.0 400.0 C428.0 382.5 424.3 335.0 436.0 323.0Z"/><path d="M440.0 600.0 C446.2 592.5 452.7 600.7 464.0 604.0 C475.3 607.3 494.0 615.2 508.0 620.0 C522.0 624.8 536.9 627.5 548.0 633.0 C559.1 638.5 567.3 646.3 574.5 653.0 C581.7 659.7 587.9 659.5 591.0 673.0 C594.1 686.5 593.5 716.3 593.0 734.0 C592.5 751.7 591.1 762.3 588.0 779.0 C584.9 795.7 578.6 819.3 574.5 834.0 C570.4 848.7 569.1 859.0 563.5 867.0 C557.9 875.0 549.4 879.5 541.0 882.0 C532.6 884.5 522.2 883.3 513.0 882.0 C503.8 880.7 492.7 878.3 486.0 874.0 C479.3 869.7 474.8 866.3 473.0 856.0 C471.2 845.7 473.2 826.7 475.0 812.0 C476.8 797.3 481.0 781.0 484.0 768.0 C487.0 755.0 489.0 743.7 493.0 734.0 C497.0 724.3 508.5 712.3 508.0 710.0 C507.5 707.7 496.3 719.3 490.0 720.0 C483.7 720.7 476.2 720.8 470.0 714.0 C463.8 707.2 458.3 688.5 453.0 679.0 C447.7 669.5 442.3 662.0 438.0 657.0 C433.7 652.0 426.7 658.5 427.0 649.0 C427.3 639.5 433.8 607.5 440.0 600.0Z"/><path d="M340.0 328.0 C352.5 324.2 369.0 322.5 385.0 322.0 C401.0 321.5 426.5 318.7 436.0 325.0 C445.5 331.3 440.7 344.0 442.0 360.0 C443.3 376.0 443.7 406.7 444.0 421.0 C444.3 435.3 444.3 431.5 444.0 446.0 C443.7 460.5 441.3 489.0 442.0 508.0 C442.7 527.0 445.0 546.8 448.0 560.0 C451.0 573.2 457.3 579.7 460.0 587.0 C462.7 594.3 465.7 594.3 464.0 604.0 C462.3 613.7 460.7 635.7 450.0 645.0 C439.3 654.3 425.0 655.8 400.0 660.0 C375.0 664.2 327.7 674.7 300.0 670.0 C272.3 665.3 246.7 642.8 234.0 632.0 C221.3 621.2 225.5 613.7 224.0 605.0 C222.5 596.3 223.5 587.5 225.0 580.0 C226.5 572.5 230.3 572.0 233.0 560.0 C235.7 548.0 237.2 527.0 241.0 508.0 C244.8 489.0 251.8 460.7 256.0 446.0 C260.2 431.3 262.3 429.8 266.0 420.0 C269.7 410.2 274.5 395.3 278.0 387.0 C281.5 378.7 281.7 377.0 287.0 370.0 C292.3 363.0 301.2 352.0 310.0 345.0 C318.8 338.0 327.5 331.8 340.0 328.0Z"/><path d="M386.0 286.0 C395.0 278.5 426.7 281.8 436.0 290.0 C445.3 298.2 451.0 327.5 442.0 335.0 C433.0 342.5 391.3 343.2 382.0 335.0 C372.7 326.8 377.0 293.5 386.0 286.0Z"/><path d="M108.0 209.0 C116.3 208.2 123.3 208.3 133.0 211.5 C142.7 214.7 155.0 222.2 166.0 228.0 C177.0 233.8 188.0 241.0 199.0 246.0 C210.0 251.0 218.2 254.3 232.0 258.0 C245.8 261.7 265.3 263.8 282.0 268.0 C298.7 272.2 319.8 278.5 332.0 283.0 C344.2 287.5 346.7 289.7 355.0 295.0 C363.3 300.3 377.8 304.2 382.0 315.0 C386.2 325.8 388.7 349.5 380.0 360.0 C371.3 370.5 339.5 375.4 330.0 378.0 C320.5 380.6 333.8 378.7 323.0 375.5 C312.2 372.3 282.8 363.9 265.0 359.0 C247.2 354.1 232.5 351.5 216.0 346.0 C199.5 340.5 179.8 332.2 166.0 326.0 C152.2 319.8 145.5 315.2 133.0 309.0 C120.5 302.8 101.0 295.0 91.0 289.0 C81.0 283.0 77.2 279.3 73.0 273.0 C68.8 266.7 66.5 258.2 66.0 251.0 C65.5 243.8 67.2 235.8 70.0 230.0 C72.8 224.2 76.7 219.5 83.0 216.0 C89.3 212.5 99.7 209.8 108.0 209.0Z"/><path d="M260.0 590.0 C279.8 587.5 325.3 584.7 347.0 590.0 C368.7 595.3 375.5 611.2 390.0 622.0 C404.5 632.8 424.0 646.7 434.0 655.0 C444.0 663.3 445.7 664.5 450.0 672.0 C454.3 679.5 458.0 691.5 460.0 700.0 C462.0 708.5 462.8 709.8 462.0 723.0 C461.2 736.2 457.6 762.3 455.0 779.0 C452.4 795.7 450.2 808.3 446.5 823.0 C442.8 837.7 437.4 853.7 433.0 867.0 C428.6 880.3 430.7 895.3 420.0 903.0 C409.3 910.7 381.3 913.0 369.0 913.0 C356.7 913.0 351.8 909.3 346.0 903.0 C340.2 896.7 334.2 890.2 334.0 875.0 C333.8 859.8 339.8 827.8 345.0 812.0 C350.2 796.2 358.7 791.0 365.0 780.0 C371.3 769.0 378.5 753.3 383.0 746.0 C387.5 738.7 396.2 738.8 392.0 736.0 C387.8 733.2 366.0 733.8 358.0 729.0 C350.0 724.2 350.8 713.8 344.0 707.0 C337.2 700.2 326.2 695.3 317.0 688.0 C307.8 680.7 298.3 670.0 289.0 663.0 C279.7 656.0 270.2 651.2 261.0 646.0 C251.8 640.8 239.5 638.8 234.0 632.0 C228.5 625.2 223.7 612.0 228.0 605.0 C232.3 598.0 240.2 592.5 260.0 590.0Z"/><path d="M416.0 45.0 C427.7 44.8 440.0 46.7 450.0 49.0 C460.0 51.3 467.7 52.5 476.0 59.0 C484.3 65.5 493.0 77.5 500.0 88.0 C507.0 98.5 513.5 111.7 518.0 122.0 C522.5 132.3 524.3 135.3 527.0 150.0 C529.7 164.7 533.2 195.0 534.0 210.0 C534.8 225.0 533.3 232.3 532.0 240.0 C530.7 247.7 529.0 250.3 526.0 256.0 C523.0 261.7 518.3 269.0 514.0 274.0 C509.7 279.0 506.0 282.3 500.0 286.0 C494.0 289.7 488.0 294.5 478.0 296.0 C468.0 297.5 453.7 297.3 440.0 295.0 C426.3 292.7 410.7 289.2 396.0 282.0 C381.3 274.8 363.0 261.3 352.0 252.0 C341.0 242.7 335.3 233.8 330.0 226.0 C324.7 218.2 322.8 218.3 320.0 205.0 C317.2 191.7 313.8 160.5 313.0 146.0 C312.2 131.5 313.2 127.3 315.0 118.0 C316.8 108.7 318.8 99.5 324.0 90.0 C329.2 80.5 336.7 67.7 346.0 61.0 C355.3 54.3 368.3 52.7 380.0 50.0 C391.7 47.3 404.3 45.2 416.0 45.0Z"/></g></mask></defs>
<g fill="#262626" filter="url(#sh)" opacity="0.7"><path d="M436.0 323.0 C447.7 311.0 480.2 327.3 500.0 328.0 C519.8 328.7 535.0 328.0 555.0 327.0 C575.0 326.0 600.3 323.0 620.0 322.0 C639.7 321.0 660.2 319.2 673.0 321.0 C685.8 322.8 691.5 327.2 697.0 333.0 C702.5 338.8 706.0 347.2 706.0 356.0 C706.0 364.8 702.5 378.5 697.0 386.0 C691.5 393.5 686.8 396.7 673.0 401.0 C659.2 405.3 633.3 408.8 614.0 412.0 C594.7 415.2 576.0 418.3 557.0 420.0 C538.0 421.7 518.2 420.7 500.0 422.0 C481.8 423.3 459.7 431.7 448.0 428.0 C436.3 424.3 432.0 417.5 430.0 400.0 C428.0 382.5 424.3 335.0 436.0 323.0Z"/><path d="M440.0 600.0 C446.2 592.5 452.7 600.7 464.0 604.0 C475.3 607.3 494.0 615.2 508.0 620.0 C522.0 624.8 536.9 627.5 548.0 633.0 C559.1 638.5 567.3 646.3 574.5 653.0 C581.7 659.7 587.9 659.5 591.0 673.0 C594.1 686.5 593.5 716.3 593.0 734.0 C592.5 751.7 591.1 762.3 588.0 779.0 C584.9 795.7 578.6 819.3 574.5 834.0 C570.4 848.7 569.1 859.0 563.5 867.0 C557.9 875.0 549.4 879.5 541.0 882.0 C532.6 884.5 522.2 883.3 513.0 882.0 C503.8 880.7 492.7 878.3 486.0 874.0 C479.3 869.7 474.8 866.3 473.0 856.0 C471.2 845.7 473.2 826.7 475.0 812.0 C476.8 797.3 481.0 781.0 484.0 768.0 C487.0 755.0 489.0 743.7 493.0 734.0 C497.0 724.3 508.5 712.3 508.0 710.0 C507.5 707.7 496.3 719.3 490.0 720.0 C483.7 720.7 476.2 720.8 470.0 714.0 C463.8 707.2 458.3 688.5 453.0 679.0 C447.7 669.5 442.3 662.0 438.0 657.0 C433.7 652.0 426.7 658.5 427.0 649.0 C427.3 639.5 433.8 607.5 440.0 600.0Z"/><path d="M340.0 328.0 C352.5 324.2 369.0 322.5 385.0 322.0 C401.0 321.5 426.5 318.7 436.0 325.0 C445.5 331.3 440.7 344.0 442.0 360.0 C443.3 376.0 443.7 406.7 444.0 421.0 C444.3 435.3 444.3 431.5 444.0 446.0 C443.7 460.5 441.3 489.0 442.0 508.0 C442.7 527.0 445.0 546.8 448.0 560.0 C451.0 573.2 457.3 579.7 460.0 587.0 C462.7 594.3 465.7 594.3 464.0 604.0 C462.3 613.7 460.7 635.7 450.0 645.0 C439.3 654.3 425.0 655.8 400.0 660.0 C375.0 664.2 327.7 674.7 300.0 670.0 C272.3 665.3 246.7 642.8 234.0 632.0 C221.3 621.2 225.5 613.7 224.0 605.0 C222.5 596.3 223.5 587.5 225.0 580.0 C226.5 572.5 230.3 572.0 233.0 560.0 C235.7 548.0 237.2 527.0 241.0 508.0 C244.8 489.0 251.8 460.7 256.0 446.0 C260.2 431.3 262.3 429.8 266.0 420.0 C269.7 410.2 274.5 395.3 278.0 387.0 C281.5 378.7 281.7 377.0 287.0 370.0 C292.3 363.0 301.2 352.0 310.0 345.0 C318.8 338.0 327.5 331.8 340.0 328.0Z"/><path d="M386.0 286.0 C395.0 278.5 426.7 281.8 436.0 290.0 C445.3 298.2 451.0 327.5 442.0 335.0 C433.0 342.5 391.3 343.2 382.0 335.0 C372.7 326.8 377.0 293.5 386.0 286.0Z"/><path d="M108.0 209.0 C116.3 208.2 123.3 208.3 133.0 211.5 C142.7 214.7 155.0 222.2 166.0 228.0 C177.0 233.8 188.0 241.0 199.0 246.0 C210.0 251.0 218.2 254.3 232.0 258.0 C245.8 261.7 265.3 263.8 282.0 268.0 C298.7 272.2 319.8 278.5 332.0 283.0 C344.2 287.5 346.7 289.7 355.0 295.0 C363.3 300.3 377.8 304.2 382.0 315.0 C386.2 325.8 388.7 349.5 380.0 360.0 C371.3 370.5 339.5 375.4 330.0 378.0 C320.5 380.6 333.8 378.7 323.0 375.5 C312.2 372.3 282.8 363.9 265.0 359.0 C247.2 354.1 232.5 351.5 216.0 346.0 C199.5 340.5 179.8 332.2 166.0 326.0 C152.2 319.8 145.5 315.2 133.0 309.0 C120.5 302.8 101.0 295.0 91.0 289.0 C81.0 283.0 77.2 279.3 73.0 273.0 C68.8 266.7 66.5 258.2 66.0 251.0 C65.5 243.8 67.2 235.8 70.0 230.0 C72.8 224.2 76.7 219.5 83.0 216.0 C89.3 212.5 99.7 209.8 108.0 209.0Z"/><path d="M260.0 590.0 C279.8 587.5 325.3 584.7 347.0 590.0 C368.7 595.3 375.5 611.2 390.0 622.0 C404.5 632.8 424.0 646.7 434.0 655.0 C444.0 663.3 445.7 664.5 450.0 672.0 C454.3 679.5 458.0 691.5 460.0 700.0 C462.0 708.5 462.8 709.8 462.0 723.0 C461.2 736.2 457.6 762.3 455.0 779.0 C452.4 795.7 450.2 808.3 446.5 823.0 C442.8 837.7 437.4 853.7 433.0 867.0 C428.6 880.3 430.7 895.3 420.0 903.0 C409.3 910.7 381.3 913.0 369.0 913.0 C356.7 913.0 351.8 909.3 346.0 903.0 C340.2 896.7 334.2 890.2 334.0 875.0 C333.8 859.8 339.8 827.8 345.0 812.0 C350.2 796.2 358.7 791.0 365.0 780.0 C371.3 769.0 378.5 753.3 383.0 746.0 C387.5 738.7 396.2 738.8 392.0 736.0 C387.8 733.2 366.0 733.8 358.0 729.0 C350.0 724.2 350.8 713.8 344.0 707.0 C337.2 700.2 326.2 695.3 317.0 688.0 C307.8 680.7 298.3 670.0 289.0 663.0 C279.7 656.0 270.2 651.2 261.0 646.0 C251.8 640.8 239.5 638.8 234.0 632.0 C228.5 625.2 223.7 612.0 228.0 605.0 C232.3 598.0 240.2 592.5 260.0 590.0Z"/><path d="M416.0 45.0 C427.7 44.8 440.0 46.7 450.0 49.0 C460.0 51.3 467.7 52.5 476.0 59.0 C484.3 65.5 493.0 77.5 500.0 88.0 C507.0 98.5 513.5 111.7 518.0 122.0 C522.5 132.3 524.3 135.3 527.0 150.0 C529.7 164.7 533.2 195.0 534.0 210.0 C534.8 225.0 533.3 232.3 532.0 240.0 C530.7 247.7 529.0 250.3 526.0 256.0 C523.0 261.7 518.3 269.0 514.0 274.0 C509.7 279.0 506.0 282.3 500.0 286.0 C494.0 289.7 488.0 294.5 478.0 296.0 C468.0 297.5 453.7 297.3 440.0 295.0 C426.3 292.7 410.7 289.2 396.0 282.0 C381.3 274.8 363.0 261.3 352.0 252.0 C341.0 242.7 335.3 233.8 330.0 226.0 C324.7 218.2 322.8 218.3 320.0 205.0 C317.2 191.7 313.8 160.5 313.0 146.0 C312.2 131.5 313.2 127.3 315.0 118.0 C316.8 108.7 318.8 99.5 324.0 90.0 C329.2 80.5 336.7 67.7 346.0 61.0 C355.3 54.3 368.3 52.7 380.0 50.0 C391.7 47.3 404.3 45.2 416.0 45.0Z"/></g>
<g fill="#000"><path d="M436.0 323.0 C447.7 311.0 480.2 327.3 500.0 328.0 C519.8 328.7 535.0 328.0 555.0 327.0 C575.0 326.0 600.3 323.0 620.0 322.0 C639.7 321.0 660.2 319.2 673.0 321.0 C685.8 322.8 691.5 327.2 697.0 333.0 C702.5 338.8 706.0 347.2 706.0 356.0 C706.0 364.8 702.5 378.5 697.0 386.0 C691.5 393.5 686.8 396.7 673.0 401.0 C659.2 405.3 633.3 408.8 614.0 412.0 C594.7 415.2 576.0 418.3 557.0 420.0 C538.0 421.7 518.2 420.7 500.0 422.0 C481.8 423.3 459.7 431.7 448.0 428.0 C436.3 424.3 432.0 417.5 430.0 400.0 C428.0 382.5 424.3 335.0 436.0 323.0Z"/><path d="M440.0 600.0 C446.2 592.5 452.7 600.7 464.0 604.0 C475.3 607.3 494.0 615.2 508.0 620.0 C522.0 624.8 536.9 627.5 548.0 633.0 C559.1 638.5 567.3 646.3 574.5 653.0 C581.7 659.7 587.9 659.5 591.0 673.0 C594.1 686.5 593.5 716.3 593.0 734.0 C592.5 751.7 591.1 762.3 588.0 779.0 C584.9 795.7 578.6 819.3 574.5 834.0 C570.4 848.7 569.1 859.0 563.5 867.0 C557.9 875.0 549.4 879.5 541.0 882.0 C532.6 884.5 522.2 883.3 513.0 882.0 C503.8 880.7 492.7 878.3 486.0 874.0 C479.3 869.7 474.8 866.3 473.0 856.0 C471.2 845.7 473.2 826.7 475.0 812.0 C476.8 797.3 481.0 781.0 484.0 768.0 C487.0 755.0 489.0 743.7 493.0 734.0 C497.0 724.3 508.5 712.3 508.0 710.0 C507.5 707.7 496.3 719.3 490.0 720.0 C483.7 720.7 476.2 720.8 470.0 714.0 C463.8 707.2 458.3 688.5 453.0 679.0 C447.7 669.5 442.3 662.0 438.0 657.0 C433.7 652.0 426.7 658.5 427.0 649.0 C427.3 639.5 433.8 607.5 440.0 600.0Z"/><path d="M340.0 328.0 C352.5 324.2 369.0 322.5 385.0 322.0 C401.0 321.5 426.5 318.7 436.0 325.0 C445.5 331.3 440.7 344.0 442.0 360.0 C443.3 376.0 443.7 406.7 444.0 421.0 C444.3 435.3 444.3 431.5 444.0 446.0 C443.7 460.5 441.3 489.0 442.0 508.0 C442.7 527.0 445.0 546.8 448.0 560.0 C451.0 573.2 457.3 579.7 460.0 587.0 C462.7 594.3 465.7 594.3 464.0 604.0 C462.3 613.7 460.7 635.7 450.0 645.0 C439.3 654.3 425.0 655.8 400.0 660.0 C375.0 664.2 327.7 674.7 300.0 670.0 C272.3 665.3 246.7 642.8 234.0 632.0 C221.3 621.2 225.5 613.7 224.0 605.0 C222.5 596.3 223.5 587.5 225.0 580.0 C226.5 572.5 230.3 572.0 233.0 560.0 C235.7 548.0 237.2 527.0 241.0 508.0 C244.8 489.0 251.8 460.7 256.0 446.0 C260.2 431.3 262.3 429.8 266.0 420.0 C269.7 410.2 274.5 395.3 278.0 387.0 C281.5 378.7 281.7 377.0 287.0 370.0 C292.3 363.0 301.2 352.0 310.0 345.0 C318.8 338.0 327.5 331.8 340.0 328.0Z"/><path d="M386.0 286.0 C395.0 278.5 426.7 281.8 436.0 290.0 C445.3 298.2 451.0 327.5 442.0 335.0 C433.0 342.5 391.3 343.2 382.0 335.0 C372.7 326.8 377.0 293.5 386.0 286.0Z"/><path d="M108.0 209.0 C116.3 208.2 123.3 208.3 133.0 211.5 C142.7 214.7 155.0 222.2 166.0 228.0 C177.0 233.8 188.0 241.0 199.0 246.0 C210.0 251.0 218.2 254.3 232.0 258.0 C245.8 261.7 265.3 263.8 282.0 268.0 C298.7 272.2 319.8 278.5 332.0 283.0 C344.2 287.5 346.7 289.7 355.0 295.0 C363.3 300.3 377.8 304.2 382.0 315.0 C386.2 325.8 388.7 349.5 380.0 360.0 C371.3 370.5 339.5 375.4 330.0 378.0 C320.5 380.6 333.8 378.7 323.0 375.5 C312.2 372.3 282.8 363.9 265.0 359.0 C247.2 354.1 232.5 351.5 216.0 346.0 C199.5 340.5 179.8 332.2 166.0 326.0 C152.2 319.8 145.5 315.2 133.0 309.0 C120.5 302.8 101.0 295.0 91.0 289.0 C81.0 283.0 77.2 279.3 73.0 273.0 C68.8 266.7 66.5 258.2 66.0 251.0 C65.5 243.8 67.2 235.8 70.0 230.0 C72.8 224.2 76.7 219.5 83.0 216.0 C89.3 212.5 99.7 209.8 108.0 209.0Z"/><path d="M260.0 590.0 C279.8 587.5 325.3 584.7 347.0 590.0 C368.7 595.3 375.5 611.2 390.0 622.0 C404.5 632.8 424.0 646.7 434.0 655.0 C444.0 663.3 445.7 664.5 450.0 672.0 C454.3 679.5 458.0 691.5 460.0 700.0 C462.0 708.5 462.8 709.8 462.0 723.0 C461.2 736.2 457.6 762.3 455.0 779.0 C452.4 795.7 450.2 808.3 446.5 823.0 C442.8 837.7 437.4 853.7 433.0 867.0 C428.6 880.3 430.7 895.3 420.0 903.0 C409.3 910.7 381.3 913.0 369.0 913.0 C356.7 913.0 351.8 909.3 346.0 903.0 C340.2 896.7 334.2 890.2 334.0 875.0 C333.8 859.8 339.8 827.8 345.0 812.0 C350.2 796.2 358.7 791.0 365.0 780.0 C371.3 769.0 378.5 753.3 383.0 746.0 C387.5 738.7 396.2 738.8 392.0 736.0 C387.8 733.2 366.0 733.8 358.0 729.0 C350.0 724.2 350.8 713.8 344.0 707.0 C337.2 700.2 326.2 695.3 317.0 688.0 C307.8 680.7 298.3 670.0 289.0 663.0 C279.7 656.0 270.2 651.2 261.0 646.0 C251.8 640.8 239.5 638.8 234.0 632.0 C228.5 625.2 223.7 612.0 228.0 605.0 C232.3 598.0 240.2 592.5 260.0 590.0Z"/><path d="M416.0 45.0 C427.7 44.8 440.0 46.7 450.0 49.0 C460.0 51.3 467.7 52.5 476.0 59.0 C484.3 65.5 493.0 77.5 500.0 88.0 C507.0 98.5 513.5 111.7 518.0 122.0 C522.5 132.3 524.3 135.3 527.0 150.0 C529.7 164.7 533.2 195.0 534.0 210.0 C534.8 225.0 533.3 232.3 532.0 240.0 C530.7 247.7 529.0 250.3 526.0 256.0 C523.0 261.7 518.3 269.0 514.0 274.0 C509.7 279.0 506.0 282.3 500.0 286.0 C494.0 289.7 488.0 294.5 478.0 296.0 C468.0 297.5 453.7 297.3 440.0 295.0 C426.3 292.7 410.7 289.2 396.0 282.0 C381.3 274.8 363.0 261.3 352.0 252.0 C341.0 242.7 335.3 233.8 330.0 226.0 C324.7 218.2 322.8 218.3 320.0 205.0 C317.2 191.7 313.8 160.5 313.0 146.0 C312.2 131.5 313.2 127.3 315.0 118.0 C316.8 108.7 318.8 99.5 324.0 90.0 C329.2 80.5 336.7 67.7 346.0 61.0 C355.3 54.3 368.3 52.7 380.0 50.0 C391.7 47.3 404.3 45.2 416.0 45.0Z"/></g>
<clipPath id="cB"><path d="M340.0 328.0 C352.5 324.2 369.0 322.5 385.0 322.0 C401.0 321.5 426.5 318.7 436.0 325.0 C445.5 331.3 440.7 344.0 442.0 360.0 C443.3 376.0 443.7 406.7 444.0 421.0 C444.3 435.3 444.3 431.5 444.0 446.0 C443.7 460.5 441.3 489.0 442.0 508.0 C442.7 527.0 445.0 546.8 448.0 560.0 C451.0 573.2 457.3 579.7 460.0 587.0 C462.7 594.3 465.7 594.3 464.0 604.0 C462.3 613.7 460.7 635.7 450.0 645.0 C439.3 654.3 425.0 655.8 400.0 660.0 C375.0 664.2 327.7 674.7 300.0 670.0 C272.3 665.3 246.7 642.8 234.0 632.0 C221.3 621.2 225.5 613.7 224.0 605.0 C222.5 596.3 223.5 587.5 225.0 580.0 C226.5 572.5 230.3 572.0 233.0 560.0 C235.7 548.0 237.2 527.0 241.0 508.0 C244.8 489.0 251.8 460.7 256.0 446.0 C260.2 431.3 262.3 429.8 266.0 420.0 C269.7 410.2 274.5 395.3 278.0 387.0 C281.5 378.7 281.7 377.0 287.0 370.0 C292.3 363.0 301.2 352.0 310.0 345.0 C318.8 338.0 327.5 331.8 340.0 328.0Z"/><path d="M386.0 286.0 C395.0 278.5 426.7 281.8 436.0 290.0 C445.3 298.2 451.0 327.5 442.0 335.0 C433.0 342.5 391.3 343.2 382.0 335.0 C372.7 326.8 377.0 293.5 386.0 286.0Z"/><path d="M416.0 45.0 C427.7 44.8 440.0 46.7 450.0 49.0 C460.0 51.3 467.7 52.5 476.0 59.0 C484.3 65.5 493.0 77.5 500.0 88.0 C507.0 98.5 513.5 111.7 518.0 122.0 C522.5 132.3 524.3 135.3 527.0 150.0 C529.7 164.7 533.2 195.0 534.0 210.0 C534.8 225.0 533.3 232.3 532.0 240.0 C530.7 247.7 529.0 250.3 526.0 256.0 C523.0 261.7 518.3 269.0 514.0 274.0 C509.7 279.0 506.0 282.3 500.0 286.0 C494.0 289.7 488.0 294.5 478.0 296.0 C468.0 297.5 453.7 297.3 440.0 295.0 C426.3 292.7 410.7 289.2 396.0 282.0 C381.3 274.8 363.0 261.3 352.0 252.0 C341.0 242.7 335.3 233.8 330.0 226.0 C324.7 218.2 322.8 218.3 320.0 205.0 C317.2 191.7 313.8 160.5 313.0 146.0 C312.2 131.5 313.2 127.3 315.0 118.0 C316.8 108.7 318.8 99.5 324.0 90.0 C329.2 80.5 336.7 67.7 346.0 61.0 C355.3 54.3 368.3 52.7 380.0 50.0 C391.7 47.3 404.3 45.2 416.0 45.0Z"/></clipPath><clipPath id="cK"><path d="M436.0 323.0 C447.7 311.0 480.2 327.3 500.0 328.0 C519.8 328.7 535.0 328.0 555.0 327.0 C575.0 326.0 600.3 323.0 620.0 322.0 C639.7 321.0 660.2 319.2 673.0 321.0 C685.8 322.8 691.5 327.2 697.0 333.0 C702.5 338.8 706.0 347.2 706.0 356.0 C706.0 364.8 702.5 378.5 697.0 386.0 C691.5 393.5 686.8 396.7 673.0 401.0 C659.2 405.3 633.3 408.8 614.0 412.0 C594.7 415.2 576.0 418.3 557.0 420.0 C538.0 421.7 518.2 420.7 500.0 422.0 C481.8 423.3 459.7 431.7 448.0 428.0 C436.3 424.3 432.0 417.5 430.0 400.0 C428.0 382.5 424.3 335.0 436.0 323.0Z"/><path d="M440.0 600.0 C446.2 592.5 452.7 600.7 464.0 604.0 C475.3 607.3 494.0 615.2 508.0 620.0 C522.0 624.8 536.9 627.5 548.0 633.0 C559.1 638.5 567.3 646.3 574.5 653.0 C581.7 659.7 587.9 659.5 591.0 673.0 C594.1 686.5 593.5 716.3 593.0 734.0 C592.5 751.7 591.1 762.3 588.0 779.0 C584.9 795.7 578.6 819.3 574.5 834.0 C570.4 848.7 569.1 859.0 563.5 867.0 C557.9 875.0 549.4 879.5 541.0 882.0 C532.6 884.5 522.2 883.3 513.0 882.0 C503.8 880.7 492.7 878.3 486.0 874.0 C479.3 869.7 474.8 866.3 473.0 856.0 C471.2 845.7 473.2 826.7 475.0 812.0 C476.8 797.3 481.0 781.0 484.0 768.0 C487.0 755.0 489.0 743.7 493.0 734.0 C497.0 724.3 508.5 712.3 508.0 710.0 C507.5 707.7 496.3 719.3 490.0 720.0 C483.7 720.7 476.2 720.8 470.0 714.0 C463.8 707.2 458.3 688.5 453.0 679.0 C447.7 669.5 442.3 662.0 438.0 657.0 C433.7 652.0 426.7 658.5 427.0 649.0 C427.3 639.5 433.8 607.5 440.0 600.0Z"/></clipPath><clipPath id="cF"><path d="M108.0 209.0 C116.3 208.2 123.3 208.3 133.0 211.5 C142.7 214.7 155.0 222.2 166.0 228.0 C177.0 233.8 188.0 241.0 199.0 246.0 C210.0 251.0 218.2 254.3 232.0 258.0 C245.8 261.7 265.3 263.8 282.0 268.0 C298.7 272.2 319.8 278.5 332.0 283.0 C344.2 287.5 346.7 289.7 355.0 295.0 C363.3 300.3 377.8 304.2 382.0 315.0 C386.2 325.8 388.7 349.5 380.0 360.0 C371.3 370.5 339.5 375.4 330.0 378.0 C320.5 380.6 333.8 378.7 323.0 375.5 C312.2 372.3 282.8 363.9 265.0 359.0 C247.2 354.1 232.5 351.5 216.0 346.0 C199.5 340.5 179.8 332.2 166.0 326.0 C152.2 319.8 145.5 315.2 133.0 309.0 C120.5 302.8 101.0 295.0 91.0 289.0 C81.0 283.0 77.2 279.3 73.0 273.0 C68.8 266.7 66.5 258.2 66.0 251.0 C65.5 243.8 67.2 235.8 70.0 230.0 C72.8 224.2 76.7 219.5 83.0 216.0 C89.3 212.5 99.7 209.8 108.0 209.0Z"/><path d="M260.0 590.0 C279.8 587.5 325.3 584.7 347.0 590.0 C368.7 595.3 375.5 611.2 390.0 622.0 C404.5 632.8 424.0 646.7 434.0 655.0 C444.0 663.3 445.7 664.5 450.0 672.0 C454.3 679.5 458.0 691.5 460.0 700.0 C462.0 708.5 462.8 709.8 462.0 723.0 C461.2 736.2 457.6 762.3 455.0 779.0 C452.4 795.7 450.2 808.3 446.5 823.0 C442.8 837.7 437.4 853.7 433.0 867.0 C428.6 880.3 430.7 895.3 420.0 903.0 C409.3 910.7 381.3 913.0 369.0 913.0 C356.7 913.0 351.8 909.3 346.0 903.0 C340.2 896.7 334.2 890.2 334.0 875.0 C333.8 859.8 339.8 827.8 345.0 812.0 C350.2 796.2 358.7 791.0 365.0 780.0 C371.3 769.0 378.5 753.3 383.0 746.0 C387.5 738.7 396.2 738.8 392.0 736.0 C387.8 733.2 366.0 733.8 358.0 729.0 C350.0 724.2 350.8 713.8 344.0 707.0 C337.2 700.2 326.2 695.3 317.0 688.0 C307.8 680.7 298.3 670.0 289.0 663.0 C279.7 656.0 270.2 651.2 261.0 646.0 C251.8 640.8 239.5 638.8 234.0 632.0 C228.5 625.2 223.7 612.0 228.0 605.0 C232.3 598.0 240.2 592.5 260.0 590.0Z"/></clipPath>
<g mask="url(#bm)"><rect width="800" height="950" fill="#dea87a"/>
<g fill="#a0613a" clip-path="url(#cK)"><path d="M403.3 436.5 Q408.0 376.2 396.8 316.7" fill="none" stroke="#b27d4d" stroke-width="5.5"/><circle cx="413.4" cy="345.8" r="4.6"/><circle cx="414.5" cy="365.8" r="2.8"/><circle cx="415.7" cy="387.8" r="4.6"/><circle cx="416.7" cy="407.8" r="3.2"/><path d="M433.2 434.9 Q438.0 374.6 426.8 315.1" fill="none" stroke="#b27d4d" stroke-width="5.5"/><circle cx="443.4" cy="344.2" r="4.6"/><circle cx="444.4" cy="364.2" r="2.8"/><circle cx="445.6" cy="386.2" r="4.6"/><circle cx="446.7" cy="406.2" r="3.2"/><path d="M463.2 433.3 Q467.9 373.0 456.7 313.5" fill="none" stroke="#b27d4d" stroke-width="5.5"/><circle cx="473.3" cy="342.6" r="4.6"/><circle cx="474.4" cy="362.6" r="2.8"/><circle cx="475.6" cy="384.6" r="4.6"/><circle cx="476.6" cy="404.5" r="3.2"/><path d="M493.1 431.7 Q497.9 371.4 486.7 311.9" fill="none" stroke="#b27d4d" stroke-width="5.5"/><circle cx="503.3" cy="341.0" r="4.6"/><circle cx="504.4" cy="361.0" r="2.8"/><circle cx="505.5" cy="383.0" r="4.6"/><circle cx="506.6" cy="402.9" r="3.2"/><path d="M523.1 430.1 Q527.9 369.8 516.7 310.3" fill="none" stroke="#b27d4d" stroke-width="5.5"/><circle cx="533.2" cy="339.4" r="4.6"/><circle cx="534.3" cy="359.4" r="2.8"/><circle cx="535.5" cy="381.4" r="4.6"/><circle cx="536.6" cy="401.3" r="3.2"/><path d="M553.0 428.5 Q557.8 368.2 546.6 308.7" fill="none" stroke="#b27d4d" stroke-width="5.5"/><circle cx="563.2" cy="337.8" r="4.6"/><circle cx="564.3" cy="357.8" r="2.8"/><circle cx="565.4" cy="379.8" r="4.6"/><circle cx="566.5" cy="399.7" r="3.2"/><path d="M583.0 426.9 Q587.8 366.5 576.6 307.1" fill="none" stroke="#b27d4d" stroke-width="5.5"/><circle cx="593.2" cy="336.2" r="4.6"/><circle cx="594.2" cy="356.2" r="2.8"/><circle cx="595.4" cy="378.2" r="4.6"/><circle cx="596.5" cy="398.1" r="3.2"/><path d="M613.0 425.3 Q617.7 364.9 606.5 305.5" fill="none" stroke="#b27d4d" stroke-width="5.5"/><circle cx="623.1" cy="334.6" r="4.6"/><circle cx="624.2" cy="354.6" r="2.8"/><circle cx="625.4" cy="376.6" r="4.6"/><circle cx="626.4" cy="396.5" r="3.2"/><path d="M642.9 423.7 Q647.7 363.3 636.5 303.9" fill="none" stroke="#b27d4d" stroke-width="5.5"/><circle cx="653.1" cy="333.0" r="4.6"/><circle cx="654.1" cy="353.0" r="2.8"/><circle cx="655.3" cy="374.9" r="4.6"/><circle cx="656.4" cy="394.9" r="3.2"/><path d="M672.9 422.1 Q677.6 361.7 666.4 302.2" fill="none" stroke="#b27d4d" stroke-width="5.5"/><circle cx="683.0" cy="331.4" r="4.6"/><circle cx="684.1" cy="351.4" r="2.8"/><circle cx="685.3" cy="373.3" r="4.6"/><circle cx="686.3" cy="393.3" r="3.2"/><path d="M702.8 420.5 Q707.6 360.1 696.4 300.6" fill="none" stroke="#b27d4d" stroke-width="5.5"/><circle cx="713.0" cy="329.8" r="4.6"/><circle cx="714.1" cy="349.8" r="2.8"/><circle cx="715.2" cy="371.7" r="4.6"/><circle cx="716.3" cy="391.7" r="3.2"/><path d="M732.8 418.9 Q737.6 358.5 726.4 299.0" fill="none" stroke="#b27d4d" stroke-width="5.5"/><circle cx="742.9" cy="328.2" r="4.6"/><circle cx="744.0" cy="348.2" r="2.8"/><circle cx="745.2" cy="370.1" r="4.6"/><circle cx="746.3" cy="390.1" r="3.2"/><path d="M393.1 661.7 Q421.2 608.1 434.4 549.0" fill="none" stroke="#b27d4d" stroke-width="5.5"/><circle cx="437.2" cy="582.0" r="4.6"/><circle cx="430.3" cy="600.8" r="2.8"/><circle cx="422.7" cy="621.4" r="4.6"/><circle cx="415.8" cy="640.2" r="3.2"/><path d="M419.3 671.3 Q447.5 617.8 460.7 558.7" fill="none" stroke="#b27d4d" stroke-width="5.5"/><circle cx="463.5" cy="591.7" r="4.6"/><circle cx="456.6" cy="610.4" r="2.8"/><circle cx="449.0" cy="631.1" r="4.6"/><circle cx="442.1" cy="649.9" r="3.2"/><path d="M445.6 681.0 Q473.8 627.4 486.9 568.3" fill="none" stroke="#b27d4d" stroke-width="5.5"/><circle cx="489.8" cy="601.3" r="4.6"/><circle cx="482.9" cy="620.1" r="2.8"/><circle cx="475.3" cy="640.7" r="4.6"/><circle cx="468.4" cy="659.5" r="3.2"/><path d="M471.9 690.6 Q500.1 637.0 513.2 577.9" fill="none" stroke="#b27d4d" stroke-width="5.5"/><circle cx="516.0" cy="610.9" r="4.6"/><circle cx="509.2" cy="629.7" r="2.8"/><circle cx="501.6" cy="650.4" r="4.6"/><circle cx="494.7" cy="669.1" r="3.2"/><path d="M498.2 700.2 Q526.4 646.7 539.5 587.6" fill="none" stroke="#b27d4d" stroke-width="5.5"/><circle cx="542.3" cy="620.6" r="4.6"/><circle cx="535.5" cy="639.3" r="2.8"/><circle cx="527.9" cy="660.0" r="4.6"/><circle cx="521.0" cy="678.8" r="3.2"/><path d="M524.5 709.9 Q552.7 656.3 565.8 597.2" fill="none" stroke="#b27d4d" stroke-width="5.5"/><circle cx="568.6" cy="630.2" r="4.6"/><circle cx="561.7" cy="649.0" r="2.8"/><circle cx="554.2" cy="669.6" r="4.6"/><circle cx="547.3" cy="688.4" r="3.2"/><path d="M550.8 719.5 Q579.0 665.9 592.1 606.9" fill="none" stroke="#b27d4d" stroke-width="5.5"/><circle cx="594.9" cy="639.8" r="4.6"/><circle cx="588.0" cy="658.6" r="2.8"/><circle cx="580.5" cy="679.3" r="4.6"/><circle cx="573.6" cy="698.1" r="3.2"/><path d="M577.1 729.2 Q605.2 675.6 618.4 616.5" fill="none" stroke="#b27d4d" stroke-width="5.5"/><circle cx="621.2" cy="649.5" r="4.6"/><circle cx="614.3" cy="668.3" r="2.8"/><circle cx="606.7" cy="688.9" r="4.6"/><circle cx="599.9" cy="707.7" r="3.2"/><path d="M526.2 645.2 Q581.0 670.9 640.6 681.4" fill="none" stroke="#b27d4d" stroke-width="5.5"/><circle cx="607.8" cy="685.7" r="4.6"/><circle cx="588.8" cy="679.7" r="2.8"/><circle cx="567.8" cy="673.0" r="4.6"/><circle cx="548.7" cy="667.0" r="3.2"/><path d="M517.8 671.9 Q572.6 697.6 632.2 708.1" fill="none" stroke="#b27d4d" stroke-width="5.5"/><circle cx="599.4" cy="712.4" r="4.6"/><circle cx="580.3" cy="706.4" r="2.8"/><circle cx="559.3" cy="699.7" r="4.6"/><circle cx="540.3" cy="693.7" r="3.2"/><path d="M509.4 698.6 Q564.2 724.3 623.8 734.8" fill="none" stroke="#b27d4d" stroke-width="5.5"/><circle cx="591.0" cy="739.1" r="4.6"/><circle cx="571.9" cy="733.1" r="2.8"/><circle cx="550.9" cy="726.4" r="4.6"/><circle cx="531.8" cy="720.4" r="3.2"/><path d="M500.9 725.3 Q555.7 751.0 615.4 761.5" fill="none" stroke="#b27d4d" stroke-width="5.5"/><circle cx="582.5" cy="765.8" r="4.6"/><circle cx="563.5" cy="759.8" r="2.8"/><circle cx="542.5" cy="753.1" r="4.6"/><circle cx="523.4" cy="747.1" r="3.2"/><path d="M492.5 752.0 Q547.3 777.7 606.9 788.2" fill="none" stroke="#b27d4d" stroke-width="5.5"/><circle cx="574.1" cy="792.5" r="4.6"/><circle cx="555.0" cy="786.5" r="2.8"/><circle cx="534.0" cy="779.8" r="4.6"/><circle cx="515.0" cy="773.8" r="3.2"/><path d="M484.1 778.7 Q538.9 804.4 598.5 814.9" fill="none" stroke="#b27d4d" stroke-width="5.5"/><circle cx="565.7" cy="819.2" r="4.6"/><circle cx="546.6" cy="813.2" r="2.8"/><circle cx="525.6" cy="806.5" r="4.6"/><circle cx="506.5" cy="800.5" r="3.2"/><path d="M475.6 805.4 Q530.4 831.1 590.1 841.6" fill="none" stroke="#b27d4d" stroke-width="5.5"/><circle cx="557.2" cy="845.9" r="4.6"/><circle cx="538.2" cy="839.9" r="2.8"/><circle cx="517.2" cy="833.2" r="4.6"/><circle cx="498.1" cy="827.2" r="3.2"/><path d="M467.2 832.1 Q522.0 857.8 581.6 868.3" fill="none" stroke="#b27d4d" stroke-width="5.5"/><circle cx="548.8" cy="872.6" r="4.6"/><circle cx="529.7" cy="866.6" r="2.8"/><circle cx="508.8" cy="859.9" r="4.6"/><circle cx="489.7" cy="853.9" r="3.2"/><path d="M458.8 858.8 Q513.6 884.5 573.2 895.0" fill="none" stroke="#b27d4d" stroke-width="5.5"/><circle cx="540.4" cy="899.3" r="4.6"/><circle cx="521.3" cy="893.3" r="2.8"/><circle cx="500.3" cy="886.6" r="4.6"/><circle cx="481.2" cy="880.6" r="3.2"/><path d="M450.3 885.5 Q505.1 911.2 564.8 921.7" fill="none" stroke="#b27d4d" stroke-width="5.5"/><circle cx="531.9" cy="926.0" r="4.6"/><circle cx="512.9" cy="920.0" r="2.8"/><circle cx="491.9" cy="913.3" r="4.6"/><circle cx="472.8" cy="907.3" r="3.2"/></g>
<g clip-path="url(#cB)"><rect width="800" height="950" fill="#dea87a"/><g fill="#a0613a"><path d="M300 62 L550 52.0" stroke="#b27d4d" stroke-width="5"/><circle cx="300.0" cy="75.0" r="2.6"/><circle cx="314.5" cy="74.4" r="2.6"/><circle cx="329.0" cy="73.8" r="2.6"/><circle cx="343.5" cy="73.3" r="2.6"/><circle cx="358.0" cy="72.7" r="2.6"/><circle cx="372.5" cy="72.1" r="2.6"/><circle cx="387.0" cy="71.5" r="2.6"/><circle cx="401.5" cy="70.9" r="2.6"/><circle cx="416.0" cy="70.4" r="2.6"/><circle cx="430.5" cy="69.8" r="2.6"/><circle cx="445.0" cy="69.2" r="2.6"/><circle cx="459.5" cy="68.6" r="2.6"/><circle cx="474.0" cy="68.0" r="2.6"/><circle cx="488.5" cy="67.5" r="2.6"/><circle cx="503.0" cy="66.9" r="2.6"/><circle cx="517.5" cy="66.3" r="2.6"/><circle cx="532.0" cy="65.7" r="2.6"/><circle cx="546.5" cy="65.1" r="2.6"/><circle cx="300.0" cy="92.0" r="4.6"/><circle cx="322.0" cy="91.1" r="4.6"/><circle cx="344.0" cy="90.2" r="4.6"/><circle cx="366.0" cy="89.4" r="4.6"/><circle cx="388.0" cy="88.5" r="4.6"/><circle cx="410.0" cy="87.6" r="4.6"/><circle cx="432.0" cy="86.7" r="4.6"/><circle cx="454.0" cy="85.8" r="4.6"/><circle cx="476.0" cy="85.0" r="4.6"/><circle cx="498.0" cy="84.1" r="4.6"/><circle cx="520.0" cy="83.2" r="4.6"/><circle cx="542.0" cy="82.3" r="4.6"/><path d="M300 108 L550 98.0" stroke="#b27d4d" stroke-width="5"/><circle cx="307.0" cy="120.7" r="2.6"/><circle cx="321.5" cy="120.1" r="2.6"/><circle cx="336.0" cy="119.6" r="2.6"/><circle cx="350.5" cy="119.0" r="2.6"/><circle cx="365.0" cy="118.4" r="2.6"/><circle cx="379.5" cy="117.8" r="2.6"/><circle cx="394.0" cy="117.2" r="2.6"/><circle cx="408.5" cy="116.7" r="2.6"/><circle cx="423.0" cy="116.1" r="2.6"/><circle cx="437.5" cy="115.5" r="2.6"/><circle cx="452.0" cy="114.9" r="2.6"/><circle cx="466.5" cy="114.3" r="2.6"/><circle cx="481.0" cy="113.8" r="2.6"/><circle cx="495.5" cy="113.2" r="2.6"/><circle cx="510.0" cy="112.6" r="2.6"/><circle cx="524.5" cy="112.0" r="2.6"/><circle cx="539.0" cy="111.4" r="2.6"/><circle cx="307.0" cy="137.7" r="4.6"/><circle cx="329.0" cy="136.8" r="4.6"/><circle cx="351.0" cy="136.0" r="4.6"/><circle cx="373.0" cy="135.1" r="4.6"/><circle cx="395.0" cy="134.2" r="4.6"/><circle cx="417.0" cy="133.3" r="4.6"/><circle cx="439.0" cy="132.4" r="4.6"/><circle cx="461.0" cy="131.6" r="4.6"/><circle cx="483.0" cy="130.7" r="4.6"/><circle cx="505.0" cy="129.8" r="4.6"/><circle cx="527.0" cy="128.9" r="4.6"/><circle cx="549.0" cy="128.0" r="4.6"/><path d="M300 154 L550 144.0" stroke="#b27d4d" stroke-width="5"/><circle cx="314.0" cy="166.4" r="2.6"/><circle cx="328.5" cy="165.9" r="2.6"/><circle cx="343.0" cy="165.3" r="2.6"/><circle cx="357.5" cy="164.7" r="2.6"/><circle cx="372.0" cy="164.1" r="2.6"/><circle cx="386.5" cy="163.5" r="2.6"/><circle cx="401.0" cy="163.0" r="2.6"/><circle cx="415.5" cy="162.4" r="2.6"/><circle cx="430.0" cy="161.8" r="2.6"/><circle cx="444.5" cy="161.2" r="2.6"/><circle cx="459.0" cy="160.6" r="2.6"/><circle cx="473.5" cy="160.1" r="2.6"/><circle cx="488.0" cy="159.5" r="2.6"/><circle cx="502.5" cy="158.9" r="2.6"/><circle cx="517.0" cy="158.3" r="2.6"/><circle cx="531.5" cy="157.7" r="2.6"/><circle cx="546.0" cy="157.2" r="2.6"/><circle cx="314.0" cy="183.4" r="4.6"/><circle cx="336.0" cy="182.6" r="4.6"/><circle cx="358.0" cy="181.7" r="4.6"/><circle cx="380.0" cy="180.8" r="4.6"/><circle cx="402.0" cy="179.9" r="4.6"/><circle cx="424.0" cy="179.0" r="4.6"/><circle cx="446.0" cy="178.2" r="4.6"/><circle cx="468.0" cy="177.3" r="4.6"/><circle cx="490.0" cy="176.4" r="4.6"/><circle cx="512.0" cy="175.5" r="4.6"/><circle cx="534.0" cy="174.6" r="4.6"/><path d="M300 200 L550 190.0" stroke="#b27d4d" stroke-width="5"/><circle cx="306.5" cy="212.7" r="2.6"/><circle cx="321.0" cy="212.2" r="2.6"/><circle cx="335.5" cy="211.6" r="2.6"/><circle cx="350.0" cy="211.0" r="2.6"/><circle cx="364.5" cy="210.4" r="2.6"/><circle cx="379.0" cy="209.8" r="2.6"/><circle cx="393.5" cy="209.3" r="2.6"/><circle cx="408.0" cy="208.7" r="2.6"/><circle cx="422.5" cy="208.1" r="2.6"/><circle cx="437.0" cy="207.5" r="2.6"/><circle cx="451.5" cy="206.9" r="2.6"/><circle cx="466.0" cy="206.4" r="2.6"/><circle cx="480.5" cy="205.8" r="2.6"/><circle cx="495.0" cy="205.2" r="2.6"/><circle cx="509.5" cy="204.6" r="2.6"/><circle cx="524.0" cy="204.0" r="2.6"/><circle cx="538.5" cy="203.5" r="2.6"/><circle cx="321.0" cy="229.2" r="4.6"/><circle cx="343.0" cy="228.3" r="4.6"/><circle cx="365.0" cy="227.4" r="4.6"/><circle cx="387.0" cy="226.5" r="4.6"/><circle cx="409.0" cy="225.6" r="4.6"/><circle cx="431.0" cy="224.8" r="4.6"/><circle cx="453.0" cy="223.9" r="4.6"/><circle cx="475.0" cy="223.0" r="4.6"/><circle cx="497.0" cy="222.1" r="4.6"/><circle cx="519.0" cy="221.2" r="4.6"/><circle cx="541.0" cy="220.4" r="4.6"/><path d="M300 246 L550 236.0" stroke="#b27d4d" stroke-width="5"/><circle cx="313.5" cy="258.5" r="2.6"/><circle cx="328.0" cy="257.9" r="2.6"/><circle cx="342.5" cy="257.3" r="2.6"/><circle cx="357.0" cy="256.7" r="2.6"/><circle cx="371.5" cy="256.1" r="2.6"/><circle cx="386.0" cy="255.6" r="2.6"/><circle cx="400.5" cy="255.0" r="2.6"/><circle cx="415.0" cy="254.4" r="2.6"/><circle cx="429.5" cy="253.8" r="2.6"/><circle cx="444.0" cy="253.2" r="2.6"/><circle cx="458.5" cy="252.7" r="2.6"/><circle cx="473.0" cy="252.1" r="2.6"/><circle cx="487.5" cy="251.5" r="2.6"/><circle cx="502.0" cy="250.9" r="2.6"/><circle cx="516.5" cy="250.3" r="2.6"/><circle cx="531.0" cy="249.8" r="2.6"/><circle cx="545.5" cy="249.2" r="2.6"/><circle cx="306.0" cy="275.8" r="4.6"/><circle cx="328.0" cy="274.9" r="4.6"/><circle cx="350.0" cy="274.0" r="4.6"/><circle cx="372.0" cy="273.1" r="4.6"/><circle cx="394.0" cy="272.2" r="4.6"/><circle cx="416.0" cy="271.4" r="4.6"/><circle cx="438.0" cy="270.5" r="4.6"/><circle cx="460.0" cy="269.6" r="4.6"/><circle cx="482.0" cy="268.7" r="4.6"/><circle cx="504.0" cy="267.8" r="4.6"/><circle cx="526.0" cy="267.0" r="4.6"/><circle cx="548.0" cy="266.1" r="4.6"/><path d="M300 292 L550 282.0" stroke="#b27d4d" stroke-width="5"/><circle cx="306.0" cy="304.8" r="2.6"/><circle cx="320.5" cy="304.2" r="2.6"/><circle cx="335.0" cy="303.6" r="2.6"/><circle cx="349.5" cy="303.0" r="2.6"/><circle cx="364.0" cy="302.4" r="2.6"/><circle cx="378.5" cy="301.9" r="2.6"/><circle cx="393.0" cy="301.3" r="2.6"/><circle cx="407.5" cy="300.7" r="2.6"/><circle cx="422.0" cy="300.1" r="2.6"/><circle cx="436.5" cy="299.5" r="2.6"/><circle cx="451.0" cy="299.0" r="2.6"/><circle cx="465.5" cy="298.4" r="2.6"/><circle cx="480.0" cy="297.8" r="2.6"/><circle cx="494.5" cy="297.2" r="2.6"/><circle cx="509.0" cy="296.6" r="2.6"/><circle cx="523.5" cy="296.1" r="2.6"/><circle cx="538.0" cy="295.5" r="2.6"/><circle cx="313.0" cy="321.5" r="4.6"/><circle cx="335.0" cy="320.6" r="4.6"/><circle cx="357.0" cy="319.7" r="4.6"/><circle cx="379.0" cy="318.8" r="4.6"/><circle cx="401.0" cy="318.0" r="4.6"/><circle cx="423.0" cy="317.1" r="4.6"/><circle cx="445.0" cy="316.2" r="4.6"/><circle cx="467.0" cy="315.3" r="4.6"/><circle cx="489.0" cy="314.4" r="4.6"/><circle cx="511.0" cy="313.6" r="4.6"/><circle cx="533.0" cy="312.7" r="4.6"/><path d="M215 330 L475 345.6" stroke="#b27d4d" stroke-width="6.5"/><circle cx="215.0" cy="343.0" r="2.6"/><circle cx="229.5" cy="343.9" r="2.6"/><circle cx="244.0" cy="344.7" r="2.6"/><circle cx="258.5" cy="345.6" r="2.6"/><circle cx="273.0" cy="346.5" r="2.6"/><circle cx="287.5" cy="347.4" r="2.6"/><circle cx="302.0" cy="348.2" r="2.6"/><circle cx="316.5" cy="349.1" r="2.6"/><circle cx="331.0" cy="350.0" r="2.6"/><circle cx="345.5" cy="350.8" r="2.6"/><circle cx="360.0" cy="351.7" r="2.6"/><circle cx="374.5" cy="352.6" r="2.6"/><circle cx="389.0" cy="353.4" r="2.6"/><circle cx="403.5" cy="354.3" r="2.6"/><circle cx="418.0" cy="355.2" r="2.6"/><circle cx="432.5" cy="356.0" r="2.6"/><circle cx="447.0" cy="356.9" r="2.6"/><circle cx="461.5" cy="357.8" r="2.6"/><circle cx="215.0" cy="360.0" r="5.2"/><circle cx="237.0" cy="361.3" r="5.2"/><circle cx="259.0" cy="362.6" r="5.2"/><circle cx="281.0" cy="364.0" r="5.2"/><circle cx="303.0" cy="365.3" r="5.2"/><circle cx="325.0" cy="366.6" r="5.2"/><circle cx="347.0" cy="367.9" r="5.2"/><circle cx="369.0" cy="369.2" r="5.2"/><circle cx="391.0" cy="370.6" r="5.2"/><circle cx="413.0" cy="371.9" r="5.2"/><circle cx="435.0" cy="373.2" r="5.2"/><circle cx="457.0" cy="374.5" r="5.2"/><path d="M215 376 L475 391.6" stroke="#b27d4d" stroke-width="6.5"/><circle cx="222.0" cy="389.4" r="2.6"/><circle cx="236.5" cy="390.3" r="2.6"/><circle cx="251.0" cy="391.2" r="2.6"/><circle cx="265.5" cy="392.0" r="2.6"/><circle cx="280.0" cy="392.9" r="2.6"/><circle cx="294.5" cy="393.8" r="2.6"/><circle cx="309.0" cy="394.6" r="2.6"/><circle cx="323.5" cy="395.5" r="2.6"/><circle cx="338.0" cy="396.4" r="2.6"/><circle cx="352.5" cy="397.2" r="2.6"/><circle cx="367.0" cy="398.1" r="2.6"/><circle cx="381.5" cy="399.0" r="2.6"/><circle cx="396.0" cy="399.9" r="2.6"/><circle cx="410.5" cy="400.7" r="2.6"/><circle cx="425.0" cy="401.6" r="2.6"/><circle cx="439.5" cy="402.5" r="2.6"/><circle cx="454.0" cy="403.3" r="2.6"/><circle cx="468.5" cy="404.2" r="2.6"/><circle cx="222.0" cy="406.4" r="5.2"/><circle cx="244.0" cy="407.7" r="5.2"/><circle cx="266.0" cy="409.1" r="5.2"/><circle cx="288.0" cy="410.4" r="5.2"/><circle cx="310.0" cy="411.7" r="5.2"/><circle cx="332.0" cy="413.0" r="5.2"/><circle cx="354.0" cy="414.3" r="5.2"/><circle cx="376.0" cy="415.7" r="5.2"/><circle cx="398.0" cy="417.0" r="5.2"/><circle cx="420.0" cy="418.3" r="5.2"/><circle cx="442.0" cy="419.6" r="5.2"/><circle cx="464.0" cy="420.9" r="5.2"/><path d="M215 422 L475 437.6" stroke="#b27d4d" stroke-width="6.5"/><circle cx="229.0" cy="435.8" r="2.6"/><circle cx="243.5" cy="436.7" r="2.6"/><circle cx="258.0" cy="437.6" r="2.6"/><circle cx="272.5" cy="438.5" r="2.6"/><circle cx="287.0" cy="439.3" r="2.6"/><circle cx="301.5" cy="440.2" r="2.6"/><circle cx="316.0" cy="441.1" r="2.6"/><circle cx="330.5" cy="441.9" r="2.6"/><circle cx="345.0" cy="442.8" r="2.6"/><circle cx="359.5" cy="443.7" r="2.6"/><circle cx="374.0" cy="444.5" r="2.6"/><circle cx="388.5" cy="445.4" r="2.6"/><circle cx="403.0" cy="446.3" r="2.6"/><circle cx="417.5" cy="447.1" r="2.6"/><circle cx="432.0" cy="448.0" r="2.6"/><circle cx="446.5" cy="448.9" r="2.6"/><circle cx="461.0" cy="449.8" r="2.6"/><circle cx="229.0" cy="452.8" r="5.2"/><circle cx="251.0" cy="454.2" r="5.2"/><circle cx="273.0" cy="455.5" r="5.2"/><circle cx="295.0" cy="456.8" r="5.2"/><circle cx="317.0" cy="458.1" r="5.2"/><circle cx="339.0" cy="459.4" r="5.2"/><circle cx="361.0" cy="460.8" r="5.2"/><circle cx="383.0" cy="462.1" r="5.2"/><circle cx="405.0" cy="463.4" r="5.2"/><circle cx="427.0" cy="464.7" r="5.2"/><circle cx="449.0" cy="466.0" r="5.2"/><circle cx="471.0" cy="467.4" r="5.2"/><path d="M215 468 L475 483.6" stroke="#b27d4d" stroke-width="6.5"/><circle cx="221.5" cy="481.4" r="2.6"/><circle cx="236.0" cy="482.3" r="2.6"/><circle cx="250.5" cy="483.1" r="2.6"/><circle cx="265.0" cy="484.0" r="2.6"/><circle cx="279.5" cy="484.9" r="2.6"/><circle cx="294.0" cy="485.7" r="2.6"/><circle cx="308.5" cy="486.6" r="2.6"/><circle cx="323.0" cy="487.5" r="2.6"/><circle cx="337.5" cy="488.4" r="2.6"/><circle cx="352.0" cy="489.2" r="2.6"/><circle cx="366.5" cy="490.1" r="2.6"/><circle cx="381.0" cy="491.0" r="2.6"/><circle cx="395.5" cy="491.8" r="2.6"/><circle cx="410.0" cy="492.7" r="2.6"/><circle cx="424.5" cy="493.6" r="2.6"/><circle cx="439.0" cy="494.4" r="2.6"/><circle cx="453.5" cy="495.3" r="2.6"/><circle cx="468.0" cy="496.2" r="2.6"/><circle cx="236.0" cy="499.3" r="5.2"/><circle cx="258.0" cy="500.6" r="5.2"/><circle cx="280.0" cy="501.9" r="5.2"/><circle cx="302.0" cy="503.2" r="5.2"/><circle cx="324.0" cy="504.5" r="5.2"/><circle cx="346.0" cy="505.9" r="5.2"/><circle cx="368.0" cy="507.2" r="5.2"/><circle cx="390.0" cy="508.5" r="5.2"/><circle cx="412.0" cy="509.8" r="5.2"/><circle cx="434.0" cy="511.1" r="5.2"/><circle cx="456.0" cy="512.5" r="5.2"/><path d="M215 514 L475 529.6" stroke="#b27d4d" stroke-width="6.5"/><circle cx="228.5" cy="527.8" r="2.6"/><circle cx="243.0" cy="528.7" r="2.6"/><circle cx="257.5" cy="529.5" r="2.6"/><circle cx="272.0" cy="530.4" r="2.6"/><circle cx="286.5" cy="531.3" r="2.6"/><circle cx="301.0" cy="532.2" r="2.6"/><circle cx="315.5" cy="533.0" r="2.6"/><circle cx="330.0" cy="533.9" r="2.6"/><circle cx="344.5" cy="534.8" r="2.6"/><circle cx="359.0" cy="535.6" r="2.6"/><circle cx="373.5" cy="536.5" r="2.6"/><circle cx="388.0" cy="537.4" r="2.6"/><circle cx="402.5" cy="538.2" r="2.6"/><circle cx="417.0" cy="539.1" r="2.6"/><circle cx="431.5" cy="540.0" r="2.6"/><circle cx="446.0" cy="540.9" r="2.6"/><circle cx="460.5" cy="541.7" r="2.6"/><circle cx="221.0" cy="544.4" r="5.2"/><circle cx="243.0" cy="545.7" r="5.2"/><circle cx="265.0" cy="547.0" r="5.2"/><circle cx="287.0" cy="548.3" r="5.2"/><circle cx="309.0" cy="549.6" r="5.2"/><circle cx="331.0" cy="551.0" r="5.2"/><circle cx="353.0" cy="552.3" r="5.2"/><circle cx="375.0" cy="553.6" r="5.2"/><circle cx="397.0" cy="554.9" r="5.2"/><circle cx="419.0" cy="556.2" r="5.2"/><circle cx="441.0" cy="557.6" r="5.2"/><circle cx="463.0" cy="558.9" r="5.2"/><path d="M215 560 L475 575.6" stroke="#b27d4d" stroke-width="6.5"/><circle cx="221.0" cy="573.4" r="2.6"/><circle cx="235.5" cy="574.2" r="2.6"/><circle cx="250.0" cy="575.1" r="2.6"/><circle cx="264.5" cy="576.0" r="2.6"/><circle cx="279.0" cy="576.8" r="2.6"/><circle cx="293.5" cy="577.7" r="2.6"/><circle cx="308.0" cy="578.6" r="2.6"/><circle cx="322.5" cy="579.5" r="2.6"/><circle cx="337.0" cy="580.3" r="2.6"/><circle cx="351.5" cy="581.2" r="2.6"/><circle cx="366.0" cy="582.1" r="2.6"/><circle cx="380.5" cy="582.9" r="2.6"/><circle cx="395.0" cy="583.8" r="2.6"/><circle cx="409.5" cy="584.7" r="2.6"/><circle cx="424.0" cy="585.5" r="2.6"/><circle cx="438.5" cy="586.4" r="2.6"/><circle cx="453.0" cy="587.3" r="2.6"/><circle cx="467.5" cy="588.1" r="2.6"/><circle cx="228.0" cy="590.8" r="5.2"/><circle cx="250.0" cy="592.1" r="5.2"/><circle cx="272.0" cy="593.4" r="5.2"/><circle cx="294.0" cy="594.7" r="5.2"/><circle cx="316.0" cy="596.1" r="5.2"/><circle cx="338.0" cy="597.4" r="5.2"/><circle cx="360.0" cy="598.7" r="5.2"/><circle cx="382.0" cy="600.0" r="5.2"/><circle cx="404.0" cy="601.3" r="5.2"/><circle cx="426.0" cy="602.7" r="5.2"/><circle cx="448.0" cy="604.0" r="5.2"/><circle cx="470.0" cy="605.3" r="5.2"/><path d="M215 606 L475 621.6" stroke="#b27d4d" stroke-width="6.5"/><circle cx="228.0" cy="619.8" r="2.6"/><circle cx="242.5" cy="620.6" r="2.6"/><circle cx="257.0" cy="621.5" r="2.6"/><circle cx="271.5" cy="622.4" r="2.6"/><circle cx="286.0" cy="623.3" r="2.6"/><circle cx="300.5" cy="624.1" r="2.6"/><circle cx="315.0" cy="625.0" r="2.6"/><circle cx="329.5" cy="625.9" r="2.6"/><circle cx="344.0" cy="626.7" r="2.6"/><circle cx="358.5" cy="627.6" r="2.6"/><circle cx="373.0" cy="628.5" r="2.6"/><circle cx="387.5" cy="629.4" r="2.6"/><circle cx="402.0" cy="630.2" r="2.6"/><circle cx="416.5" cy="631.1" r="2.6"/><circle cx="431.0" cy="632.0" r="2.6"/><circle cx="445.5" cy="632.8" r="2.6"/><circle cx="460.0" cy="633.7" r="2.6"/><circle cx="474.5" cy="634.6" r="2.6"/><circle cx="235.0" cy="637.2" r="5.2"/><circle cx="257.0" cy="638.5" r="5.2"/><circle cx="279.0" cy="639.8" r="5.2"/><circle cx="301.0" cy="641.2" r="5.2"/><circle cx="323.0" cy="642.5" r="5.2"/><circle cx="345.0" cy="643.8" r="5.2"/><circle cx="367.0" cy="645.1" r="5.2"/><circle cx="389.0" cy="646.4" r="5.2"/><circle cx="411.0" cy="647.8" r="5.2"/><circle cx="433.0" cy="649.1" r="5.2"/><circle cx="455.0" cy="650.4" r="5.2"/><path d="M215 652 L475 667.6" stroke="#b27d4d" stroke-width="6.5"/><circle cx="220.5" cy="665.3" r="2.6"/><circle cx="235.0" cy="666.2" r="2.6"/><circle cx="249.5" cy="667.1" r="2.6"/><circle cx="264.0" cy="667.9" r="2.6"/><circle cx="278.5" cy="668.8" r="2.6"/><circle cx="293.0" cy="669.7" r="2.6"/><circle cx="307.5" cy="670.5" r="2.6"/><circle cx="322.0" cy="671.4" r="2.6"/><circle cx="336.5" cy="672.3" r="2.6"/><circle cx="351.0" cy="673.2" r="2.6"/><circle cx="365.5" cy="674.0" r="2.6"/><circle cx="380.0" cy="674.9" r="2.6"/><circle cx="394.5" cy="675.8" r="2.6"/><circle cx="409.0" cy="676.6" r="2.6"/><circle cx="423.5" cy="677.5" r="2.6"/><circle cx="438.0" cy="678.4" r="2.6"/><circle cx="452.5" cy="679.2" r="2.6"/><circle cx="467.0" cy="680.1" r="2.6"/><circle cx="220.0" cy="682.3" r="5.2"/><circle cx="242.0" cy="683.6" r="5.2"/><circle cx="264.0" cy="684.9" r="5.2"/><circle cx="286.0" cy="686.3" r="5.2"/><circle cx="308.0" cy="687.6" r="5.2"/><circle cx="330.0" cy="688.9" r="5.2"/><circle cx="352.0" cy="690.2" r="5.2"/><circle cx="374.0" cy="691.5" r="5.2"/><circle cx="396.0" cy="692.9" r="5.2"/><circle cx="418.0" cy="694.2" r="5.2"/><circle cx="440.0" cy="695.5" r="5.2"/><circle cx="462.0" cy="696.8" r="5.2"/><path d="M215 698 L475 713.6" stroke="#b27d4d" stroke-width="6.5"/><circle cx="227.5" cy="711.8" r="2.6"/><circle cx="242.0" cy="712.6" r="2.6"/><circle cx="256.5" cy="713.5" r="2.6"/><circle cx="271.0" cy="714.4" r="2.6"/><circle cx="285.5" cy="715.2" r="2.6"/><circle cx="300.0" cy="716.1" r="2.6"/><circle cx="314.5" cy="717.0" r="2.6"/><circle cx="329.0" cy="717.8" r="2.6"/><circle cx="343.5" cy="718.7" r="2.6"/><circle cx="358.0" cy="719.6" r="2.6"/><circle cx="372.5" cy="720.5" r="2.6"/><circle cx="387.0" cy="721.3" r="2.6"/><circle cx="401.5" cy="722.2" r="2.6"/><circle cx="416.0" cy="723.1" r="2.6"/><circle cx="430.5" cy="723.9" r="2.6"/><circle cx="445.0" cy="724.8" r="2.6"/><circle cx="459.5" cy="725.7" r="2.6"/><circle cx="474.0" cy="726.5" r="2.6"/><circle cx="227.0" cy="728.7" r="5.2"/><circle cx="249.0" cy="730.0" r="5.2"/><circle cx="271.0" cy="731.4" r="5.2"/><circle cx="293.0" cy="732.7" r="5.2"/><circle cx="315.0" cy="734.0" r="5.2"/><circle cx="337.0" cy="735.3" r="5.2"/><circle cx="359.0" cy="736.6" r="5.2"/><circle cx="381.0" cy="738.0" r="5.2"/><circle cx="403.0" cy="739.3" r="5.2"/><circle cx="425.0" cy="740.6" r="5.2"/><circle cx="447.0" cy="741.9" r="5.2"/><circle cx="469.0" cy="743.2" r="5.2"/></g></g>
<g clip-path="url(#cF)"><rect width="800" height="950" fill="#dea87a"/><g fill="#a0613a"><path d="M23.1 287.9 Q49.1 233.3 59.8 173.7" fill="none" stroke="#b27d4d" stroke-width="5.5"/><circle cx="64.9" cy="206.8" r="4.6"/><circle cx="58.8" cy="225.9" r="2.8"/><circle cx="52.0" cy="246.8" r="4.6"/><circle cx="45.9" cy="265.9" r="3.2"/><path d="M51.6 297.1 Q77.6 242.4 88.4 182.9" fill="none" stroke="#b27d4d" stroke-width="5.5"/><circle cx="93.5" cy="216.0" r="4.6"/><circle cx="87.3" cy="235.1" r="2.8"/><circle cx="80.6" cy="256.0" r="4.6"/><circle cx="74.5" cy="275.1" r="3.2"/><path d="M80.2 306.3 Q106.2 251.6 116.9 192.1" fill="none" stroke="#b27d4d" stroke-width="5.5"/><circle cx="122.0" cy="225.2" r="4.6"/><circle cx="115.9" cy="244.3" r="2.8"/><circle cx="109.2" cy="265.2" r="4.6"/><circle cx="103.0" cy="284.2" r="3.2"/><path d="M108.8 315.5 Q134.7 260.8 145.5 201.2" fill="none" stroke="#b27d4d" stroke-width="5.5"/><circle cx="150.6" cy="234.4" r="4.6"/><circle cx="144.5" cy="253.4" r="2.8"/><circle cx="137.7" cy="274.4" r="4.6"/><circle cx="131.6" cy="293.4" r="3.2"/><path d="M137.3 324.7 Q163.3 270.0 174.0 210.4" fill="none" stroke="#b27d4d" stroke-width="5.5"/><circle cx="179.1" cy="243.6" r="4.6"/><circle cx="173.0" cy="262.6" r="2.8"/><circle cx="166.3" cy="283.6" r="4.6"/><circle cx="160.2" cy="302.6" r="3.2"/><path d="M165.9 333.8 Q191.9 279.2 202.6 219.6" fill="none" stroke="#b27d4d" stroke-width="5.5"/><circle cx="207.7" cy="252.8" r="4.6"/><circle cx="201.6" cy="271.8" r="2.8"/><circle cx="194.9" cy="292.7" r="4.6"/><circle cx="188.7" cy="311.8" r="3.2"/><path d="M194.4 343.0 Q220.4 288.3 231.2 228.8" fill="none" stroke="#b27d4d" stroke-width="5.5"/><circle cx="236.3" cy="261.9" r="4.6"/><circle cx="230.1" cy="281.0" r="2.8"/><circle cx="223.4" cy="301.9" r="4.6"/><circle cx="217.3" cy="321.0" r="3.2"/><path d="M223.0 352.2 Q249.0 297.5 259.7 238.0" fill="none" stroke="#b27d4d" stroke-width="5.5"/><circle cx="264.8" cy="271.1" r="4.6"/><circle cx="258.7" cy="290.2" r="2.8"/><circle cx="252.0" cy="311.1" r="4.6"/><circle cx="245.9" cy="330.1" r="3.2"/><path d="M251.6 361.4 Q277.5 306.7 288.3 247.1" fill="none" stroke="#b27d4d" stroke-width="5.5"/><circle cx="293.4" cy="280.3" r="4.6"/><circle cx="287.3" cy="299.3" r="2.8"/><circle cx="280.5" cy="320.3" r="4.6"/><circle cx="274.4" cy="339.3" r="3.2"/><path d="M280.1 370.6 Q306.1 315.9 316.8 256.3" fill="none" stroke="#b27d4d" stroke-width="5.5"/><circle cx="321.9" cy="289.5" r="4.6"/><circle cx="315.8" cy="308.5" r="2.8"/><circle cx="309.1" cy="329.5" r="4.6"/><circle cx="303.0" cy="348.5" r="3.2"/><path d="M308.7 379.7 Q334.7 325.1 345.4 265.5" fill="none" stroke="#b27d4d" stroke-width="5.5"/><circle cx="350.5" cy="298.7" r="4.6"/><circle cx="344.4" cy="317.7" r="2.8"/><circle cx="337.7" cy="338.6" r="4.6"/><circle cx="331.5" cy="357.7" r="3.2"/><path d="M337.2 388.9 Q363.2 334.3 374.0 274.7" fill="none" stroke="#b27d4d" stroke-width="5.5"/><circle cx="379.1" cy="307.8" r="4.6"/><circle cx="372.9" cy="326.9" r="2.8"/><circle cx="366.2" cy="347.8" r="4.6"/><circle cx="360.1" cy="366.9" r="3.2"/><path d="M199.8 663.2 Q231.8 611.8 249.1 553.8" fill="none" stroke="#b27d4d" stroke-width="5.5"/><circle cx="249.5" cy="586.9" r="4.6"/><circle cx="241.3" cy="605.1" r="2.8"/><circle cx="232.3" cy="625.2" r="4.6"/><circle cx="224.1" cy="643.4" r="3.2"/><path d="M225.4 674.7 Q257.3 623.3 274.6 565.3" fill="none" stroke="#b27d4d" stroke-width="5.5"/><circle cx="275.1" cy="598.4" r="4.6"/><circle cx="266.9" cy="616.6" r="2.8"/><circle cx="257.8" cy="636.7" r="4.6"/><circle cx="249.6" cy="654.9" r="3.2"/><path d="M250.9 686.2 Q282.8 634.8 300.2 576.8" fill="none" stroke="#b27d4d" stroke-width="5.5"/><circle cx="300.6" cy="609.9" r="4.6"/><circle cx="292.4" cy="628.1" r="2.8"/><circle cx="283.4" cy="648.2" r="4.6"/><circle cx="275.2" cy="666.4" r="3.2"/><path d="M276.4 697.7 Q308.4 646.3 325.7 588.3" fill="none" stroke="#b27d4d" stroke-width="5.5"/><circle cx="326.1" cy="621.4" r="4.6"/><circle cx="317.9" cy="639.6" r="2.8"/><circle cx="308.9" cy="659.7" r="4.6"/><circle cx="300.7" cy="677.9" r="3.2"/><path d="M302.0 709.2 Q333.9 657.8 351.2 599.8" fill="none" stroke="#b27d4d" stroke-width="5.5"/><circle cx="351.7" cy="632.9" r="4.6"/><circle cx="343.5" cy="651.1" r="2.8"/><circle cx="334.4" cy="671.2" r="4.6"/><circle cx="326.2" cy="689.4" r="3.2"/><path d="M327.5 720.7 Q359.4 669.2 376.8 611.2" fill="none" stroke="#b27d4d" stroke-width="5.5"/><circle cx="377.2" cy="644.3" r="4.6"/><circle cx="369.0" cy="662.6" r="2.8"/><circle cx="360.0" cy="682.6" r="4.6"/><circle cx="351.8" cy="700.9" r="3.2"/><path d="M353.0 732.2 Q385.0 680.7 402.3 622.7" fill="none" stroke="#b27d4d" stroke-width="5.5"/><circle cx="402.7" cy="655.8" r="4.6"/><circle cx="394.5" cy="674.1" r="2.8"/><circle cx="385.5" cy="694.1" r="4.6"/><circle cx="377.3" cy="712.4" r="3.2"/><path d="M378.6 743.7 Q410.5 692.2 427.8 634.2" fill="none" stroke="#b27d4d" stroke-width="5.5"/><circle cx="428.3" cy="667.3" r="4.6"/><circle cx="420.1" cy="685.6" r="2.8"/><circle cx="411.0" cy="705.6" r="4.6"/><circle cx="402.8" cy="723.9" r="3.2"/><path d="M404.1 755.1 Q436.0 703.7 453.4 645.7" fill="none" stroke="#b27d4d" stroke-width="5.5"/><circle cx="453.8" cy="678.8" r="4.6"/><circle cx="445.6" cy="697.1" r="2.8"/><circle cx="436.6" cy="717.1" r="4.6"/><circle cx="428.4" cy="735.4" r="3.2"/><path d="M429.6 766.6 Q461.6 715.2 478.9 657.2" fill="none" stroke="#b27d4d" stroke-width="5.5"/><circle cx="479.3" cy="690.3" r="4.6"/><circle cx="471.1" cy="708.5" r="2.8"/><circle cx="462.1" cy="728.6" r="4.6"/><circle cx="453.9" cy="746.8" r="3.2"/><path d="M406.5 680.0 Q458.1 711.7 516.2 728.8" fill="none" stroke="#b27d4d" stroke-width="5.5"/><circle cx="483.1" cy="729.4" r="4.6"/><circle cx="464.8" cy="721.3" r="2.8"/><circle cx="444.7" cy="712.3" r="4.6"/><circle cx="426.4" cy="704.2" r="3.2"/><path d="M395.2 705.6 Q446.8 737.3 504.8 754.4" fill="none" stroke="#b27d4d" stroke-width="5.5"/><circle cx="471.7" cy="755.0" r="4.6"/><circle cx="453.5" cy="746.9" r="2.8"/><circle cx="433.3" cy="737.9" r="4.6"/><circle cx="415.1" cy="729.8" r="3.2"/><path d="M383.8 731.2 Q435.4 762.9 493.5 780.0" fill="none" stroke="#b27d4d" stroke-width="5.5"/><circle cx="460.4" cy="780.6" r="4.6"/><circle cx="442.1" cy="772.4" r="2.8"/><circle cx="422.0" cy="763.5" r="4.6"/><circle cx="403.7" cy="755.4" r="3.2"/><path d="M372.4 756.8 Q424.0 788.5 482.1 805.5" fill="none" stroke="#b27d4d" stroke-width="5.5"/><circle cx="449.0" cy="806.2" r="4.6"/><circle cx="430.7" cy="798.0" r="2.8"/><circle cx="410.6" cy="789.1" r="4.6"/><circle cx="392.3" cy="781.0" r="3.2"/><path d="M361.1 782.4 Q412.6 814.1 470.7 831.1" fill="none" stroke="#b27d4d" stroke-width="5.5"/><circle cx="437.6" cy="831.7" r="4.6"/><circle cx="419.3" cy="823.6" r="2.8"/><circle cx="399.2" cy="814.7" r="4.6"/><circle cx="381.0" cy="806.6" r="3.2"/><path d="M349.7 808.0 Q401.3 839.7 459.3 856.7" fill="none" stroke="#b27d4d" stroke-width="5.5"/><circle cx="426.2" cy="857.3" r="4.6"/><circle cx="408.0" cy="849.2" r="2.8"/><circle cx="387.9" cy="840.3" r="4.6"/><circle cx="369.6" cy="832.1" r="3.2"/><path d="M338.3 833.6 Q389.9 865.2 448.0 882.3" fill="none" stroke="#b27d4d" stroke-width="5.5"/><circle cx="414.9" cy="882.9" r="4.6"/><circle cx="396.6" cy="874.8" r="2.8"/><circle cx="376.5" cy="865.9" r="4.6"/><circle cx="358.2" cy="857.7" r="3.2"/><path d="M326.9 859.2 Q378.5 890.8 436.6 907.9" fill="none" stroke="#b27d4d" stroke-width="5.5"/><circle cx="403.5" cy="908.5" r="4.6"/><circle cx="385.2" cy="900.4" r="2.8"/><circle cx="365.1" cy="891.4" r="4.6"/><circle cx="346.8" cy="883.3" r="3.2"/><path d="M315.6 884.7 Q367.1 916.4 425.2 933.5" fill="none" stroke="#b27d4d" stroke-width="5.5"/><circle cx="392.1" cy="934.1" r="4.6"/><circle cx="373.8" cy="926.0" r="2.8"/><circle cx="353.7" cy="917.0" r="4.6"/><circle cx="335.5" cy="908.9" r="3.2"/><path d="M304.2 910.3 Q355.8 942.0 413.9 959.1" fill="none" stroke="#b27d4d" stroke-width="5.5"/><circle cx="380.8" cy="959.7" r="4.6"/><circle cx="362.5" cy="951.5" r="2.8"/><circle cx="342.4" cy="942.6" r="4.6"/><circle cx="324.1" cy="934.5" r="3.2"/></g></g>
</g>
<path d="M347.0 594.0 C354.2 599.2 375.5 614.8 390.0 625.0 C404.5 635.2 424.0 646.2 434.0 655.0 C444.0 663.8 446.3 669.7 450.0 678.0 C453.7 686.3 454.8 697.2 456.0 705.0 C457.2 712.8 456.8 721.7 457.0 725.0" fill="none" stroke="#000" stroke-width="11" stroke-linecap="round"/><path d="M422.0 650.0 C425.8 648.0 438.3 641.3 445.0 638.0 C451.7 634.7 459.2 631.3 462.0 630.0" fill="none" stroke="#000" stroke-width="11" stroke-linecap="round"/><path d="M355.7 299.0 C357.1 302.0 361.0 310.9 364.0 317.0 C367.0 323.1 371.9 332.6 373.5 335.7" fill="none" stroke="#000" stroke-width="11" stroke-linecap="round"/><path d="M434.0 342.0 C435.0 348.3 438.0 366.7 440.0 380.0 C442.0 393.3 445.0 415.0 446.0 422.0" fill="none" stroke="#000" stroke-width="11" stroke-linecap="round"/><path d="M382.0 274.0 C389.5 276.0 414.0 283.0 427.0 286.0 C440.0 289.0 454.5 291.0 460.0 292.0" fill="none" stroke="#000" stroke-width="11" stroke-linecap="round"/><path d="M462.0 712.0 C465.3 712.8 473.5 718.7 482.0 717.0 C490.5 715.3 507.8 704.5 513.0 702.0" fill="none" stroke="#000" stroke-width="11" stroke-linecap="round"/>
<path d="M359.0 670.2 L370.0 562.3 L364.0 561.7 L355.0 669.8 Z" fill="#fff" stroke="#c89a78" stroke-width="0.8"/><path d="M375.9 563.0 L381.0 456.2 L377.0 455.8 L358.1 561.0 Z" fill="#fff" stroke="#c89a78" stroke-width="0.8"/><circle cx="367" cy="562" r="9.5" fill="#fff"/><circle cx="367" cy="562" r="5.2" fill="#3a302c"/><path d="M388.2 458.2 L410.5 331.4 L407.5 330.6 L369.8 453.8 Z" fill="#fff" stroke="#c89a78" stroke-width="0.8"/><circle cx="379" cy="456" r="10.0" fill="#fff"/><circle cx="379" cy="456" r="5.2" fill="#3a302c"/><path d="M410.9 331.5 L420.0 288.2 L418.0 287.8 L407.1 330.5 Z" fill="#fff" stroke="#c89a78" stroke-width="0.8"/><path d="M428.0 287.8 L413.6 59.7 L413.6 59.7 L410.0 288.2 Z" fill="#fff" stroke="#c89a78" stroke-width="0.8"/><circle cx="419" cy="288" r="9.5" fill="#fff"/><circle cx="419" cy="288" r="5.2" fill="#3a302c"/><path d="M341.4 313.6 L212.0 291.7 L211.6 293.7 L337.4 331.2 Z" fill="#fff" stroke="#c89a78" stroke-width="0.8"/><circle cx="339.4000000000001" cy="322.4" r="9.5" fill="#fff"/><circle cx="339.4000000000001" cy="322.4" r="5.2" fill="#3a302c"/><path d="M215.2 284.4 L78.2 237.8 L78.2 237.8 L208.4 301.0 Z" fill="#fff" stroke="#c89a78" stroke-width="0.8"/><circle cx="211.79999999999995" cy="292.7" r="9.5" fill="#fff"/><circle cx="211.79999999999995" cy="292.7" r="5.2" fill="#3a302c"/><path d="M406.6 339.9 L554.2 375.7 L555.0 372.9 L411.8 322.7 Z" fill="#fff" stroke="#c89a78" stroke-width="0.8"/><circle cx="409.1999999999998" cy="331.29999999999995" r="9.5" fill="#fff"/><circle cx="409.1999999999998" cy="331.29999999999995" r="5.2" fill="#3a302c"/><path d="M556.4 383.1 L688.2 347.6 L688.2 347.6 L552.8 365.5 Z" fill="#fff" stroke="#c89a78" stroke-width="0.8"/><circle cx="554.5999999999999" cy="374.29999999999995" r="9.5" fill="#fff"/><circle cx="554.5999999999999" cy="374.29999999999995" r="5.2" fill="#3a302c"/><path d="M285.2 630.8 L431.1 724.9 L432.9 722.5 L295.6 616.2 Z" fill="#fff" stroke="#c89a78" stroke-width="0.8"/><circle cx="290.4000000000001" cy="623.5" r="9.5" fill="#fff"/><circle cx="290.4000000000001" cy="623.5" r="5.2" fill="#3a302c"/><path d="M423.7 720.1 L353.4 904.6 L353.4 904.6 L440.3 727.3 Z" fill="#fff" stroke="#c89a78" stroke-width="0.8"/><circle cx="432" cy="723.7" r="9.5" fill="#fff"/><circle cx="432" cy="723.7" r="5.2" fill="#3a302c"/><path d="M408.7 625.9 L561.2 683.9 L562.4 681.1 L415.9 609.3 Z" fill="#fff" stroke="#c89a78" stroke-width="0.8"/><circle cx="412.3000000000002" cy="617.6" r="9.5" fill="#fff"/><circle cx="412.3000000000002" cy="617.6" r="5.2" fill="#3a302c"/><path d="M553.2 679.9 L504.8 871.2 L504.8 871.2 L570.4 685.1 Z" fill="#fff" stroke="#c89a78" stroke-width="0.8"/><circle cx="561.8000000000002" cy="682.5" r="9.5" fill="#fff"/><circle cx="561.8000000000002" cy="682.5" r="5.2" fill="#3a302c"/><circle cx="409.1999999999998" cy="331.29999999999995" r="8.5" fill="#fff"/><circle cx="409.1999999999998" cy="331.29999999999995" r="5" fill="#3a302c"/>
<g fill="#f8f8f8" transform="translate(-1700 -200)"><circle cx="2276" cy="496" r="23.5"/><circle cx="2314" cy="471" r="23"/><rect x="2275" y="488" width="72" height="45" rx="5"/><path d="M2346 505 L2360 496 H2372 V522 H2360 L2346 514 Z"/></g>
</svg>
<div style="left:3191px;top:137px;width:649px;height:1932px;background:#c2c2c2;border-right:3px solid #d0d0d0"></div>
<div style="left:0px;top:1332.5px;width:3186.5px;height:30.5px;background:linear-gradient(#8e8e8e,#a4a4a4 3px,#a4a4a4)"></div>
<div style="left:0px;top:1332px;width:752px;height:2px;background:#a0a0a0"></div>
<svg style="left:9px;top:1341px" width="18" height="15"><path d="M1 2.5 H6.5 L8 4.5 H16.5 V13.5 H1 Z" fill="none" stroke="#555" stroke-width="1.3"/><path d="M1 6 H16.5" stroke="#555" stroke-width="1.2"/></svg>
<div class="t" style="left:32.5px;top:1338.5px;font-size:16.5px;line-height:26px;letter-spacing:0.9px;">Project</div>
<svg style="left:122px;top:1339px" width="14" height="17"><rect x="1" y="1" width="12" height="15" fill="#eee" stroke="#555" stroke-width="1.3"/><path d="M3.5 5 H10.5 M3.5 8 H10.5 M3.5 11 H10.5" stroke="#666" stroke-width="1"/></svg>
<div class="t" style="left:142px;top:1338.5px;font-size:16.5px;line-height:26px;letter-spacing:0.9px;">Console</div>
<div style="left:226.5px;top:1339.5px;width:135.5px;height:24px;background:linear-gradient(#ececec,#dadada);border:1px solid #8c8c8c;border-bottom:none;border-radius:4px 4px 0 0;"></div>
<svg style="left:238px;top:1342px" width="18" height="18"><circle cx="8" cy="8" r="7" fill="#b82a20"/></svg>
<div class="t" style="left:260px;top:1338.5px;font-size:16.5px;line-height:26px;letter-spacing:0.9px;">Animation</div>
<svg style="left:3141px;top:1346px" width="12" height="16"><path d="M3 7 V4.5 C3 1 9 1 9 4.5" fill="none" stroke="#444" stroke-width="1.6"/><rect x="0.5" y="7" width="10.5" height="8.5" fill="#444"/></svg>
<svg style="left:3159px;top:1349px" width="22" height="12"><path d="M0 2 H7 L3.5 6.5 Z" fill="#333"/><rect x="8" y="1.5" width="12" height="1.5" fill="#333"/><rect x="8" y="4.7" width="12" height="1.5" fill="#333"/><rect x="8" y="7.9" width="12" height="1.5" fill="#333"/></svg>
<div style="left:0px;top:1363px;width:795px;height:706px;background:#c2c2c2"></div>
<div style="left:0px;top:1363px;width:795px;height:25px;background:linear-gradient(#e6e6e6,#cfcfcf);border-bottom:1px solid #999;"></div>
<div style="left:6.5px;top:1364px;width:67px;height:23.5px;background:#fdfdfd;border-left:1px solid #a0a0a0;border-right:1px solid #a0a0a0"></div>
<div class="t" style="left:13px;top:1363.5px;font-size:15px;line-height:24px;letter-spacing:0.5px;color:#111">Preview</div>
<div style="left:73.5px;top:1364px;width:38px;height:23.5px;background:#f0a0a0;border-right:1px solid #a0a0a0"></div>
<svg style="left:83px;top:1366px" width="20" height="18"><circle cx="9.5" cy="8.5" r="7" fill="#c8261e"/></svg>
<div style="left:152px;top:1364px;width:1px;height:24px;background:#a8a8a8"></div>
<div style="left:193px;top:1364px;width:1px;height:24px;background:#a8a8a8"></div>
<div style="left:233px;top:1364px;width:1px;height:24px;background:#a8a8a8"></div>
<div style="left:274px;top:1364px;width:1px;height:24px;background:#a8a8a8"></div>
<div style="left:314px;top:1364px;width:1px;height:24px;background:#a8a8a8"></div>
<svg style="left:112px;top:1364px" width="202" height="24" fill="#222">
<rect x="10" y="6.5" width="3" height="11"/><path d="M13.5 12 L21 6.5 V17.5 Z"/><path d="M20 12 L28 6.5 V17.5 Z"/>
<rect x="54" y="6.5" width="3" height="11"/><path d="M57.5 12 L66 6.5 V17.5 Z"/>
<path d="M99 6.5 L107.5 12 L99 17.5 Z"/>
<path d="M135 6.5 L143.5 12 L135 17.5 Z"/><rect x="144" y="6.5" width="3" height="11"/>
<path d="M173 6.5 L181 12 L173 17.5 Z"/><path d="M180 6.5 L188 12 L180 17.5 Z"/><rect x="188.5" y="6.5" width="3" height="11"/>
</svg>
<div style="left:735.5px;top:1365px;width:51.5px;height:21px;background:#d6d6d6;border:1.5px solid #8a8a8a;border-top-color:#6a6a6a"></div>
<div class="t" style="left:740.5px;top:1363.5px;font-size:15px;line-height:24px;color:#111">0</div>
<div style="left:0px;top:1388px;width:795px;height:28px;background:linear-gradient(#e6e6e6,#cfcfcf);border-bottom:1px solid #999;"></div>
<div style="left:6.5px;top:1389px;width:1px;height:27px;background:#a0a0a0"></div>
<div style="left:313px;top:1389px;width:1px;height:27px;background:#a0a0a0"></div>
<div class="t" style="left:15px;top:1390.5px;font-size:15px;line-height:24px;letter-spacing:0.45px;color:#111">playeCharacterJump</div>
<svg style="left:299px;top:1394px" width="9" height="16"><path d="M0.5 6 L4.5 1 L8.5 6 Z M0.5 9.5 L4.5 14.5 L8.5 9.5 Z" fill="#555"/></svg>
<div class="t" style="left:568px;top:1390.5px;font-size:15px;line-height:24px;letter-spacing:0.5px;color:#111">Samples</div>
<div style="left:651px;top:1391px;width:52px;height:21px;background:#d6d6d6;border:1.5px solid #8a8a8a;border-top-color:#6a6a6a"></div>
<div class="t" style="left:656px;top:1390.0px;font-size:15px;line-height:24px;color:#111">60</div>
<div style="left:709.5px;top:1389px;width:1px;height:27px;background:#a0a0a0"></div>
<div style="left:748.5px;top:1389px;width:1px;height:27px;background:#a0a0a0"></div>
<div style="left:787.5px;top:1389px;width:1px;height:27px;background:#a0a0a0"></div>
<svg style="left:715px;top:1392px" width="32" height="22"><path d="M9 2.5 L15 8.5 L9 14.5 L3 8.5 Z" fill="none" stroke="#555" stroke-width="1.3"/><path d="M16 15 H24 M20 11 V19" stroke="#444" stroke-width="1.8"/></svg>
<svg style="left:754px;top:1392px" width="32" height="22"><path d="M8 2 H14 V15 L11 19 L8 15 Z" fill="none" stroke="#555" stroke-width="1.3"/><path d="M16 15 H24 M20 11 V19" stroke="#444" stroke-width="1.8"/></svg>
<div style="left:0px;top:1416px;width:795px;height:24px;background:#bdbdbd"></div>
<div style="left:0px;top:1440px;width:795px;height:24px;background:#cbcbcb"></div>
<svg style="left:26px;top:1445px" width="12" height="14"><path d="M0.5 0.5 L11 6.75 L0.5 13 Z" fill="#7a7a7a"/></svg>
<svg style="left:43px;top:1443px" width="18" height="18"><path d="M9 1.5 V10" stroke="#6bbf2a" stroke-width="2.4"/><path d="M9 10 L2 15.5" stroke="#3a8fe0" stroke-width="2.4"/><path d="M9 10 L16 15.5" stroke="#d82a2a" stroke-width="2.4"/></svg>
<div class="t" style="left:63.7px;top:1439.0px;font-size:16.5px;line-height:26px;letter-spacing:1.4px;">hips : Rotation</div>
<svg style="left:763px;top:1444px" width="16" height="16"><path d="M8 1.5 L14.5 8 L8 14.5 L1.5 8 Z" fill="none" stroke="#444" stroke-width="1.3"/><circle cx="8" cy="8" r="1.8" fill="#444"/></svg>
<div style="left:0px;top:1464px;width:795px;height:24px;background:#c1c1c1"></div>
<svg style="left:47px;top:1469px" width="12" height="14"><path d="M0.5 0.5 L11 6.75 L0.5 13 Z" fill="#7a7a7a"/></svg>
<svg style="left:64px;top:1467px" width="18" height="18"><path d="M9 1.5 V10" stroke="#6bbf2a" stroke-width="2.4"/><path d="M9 10 L2 15.5" stroke="#3a8fe0" stroke-width="2.4"/><path d="M9 10 L16 15.5" stroke="#d82a2a" stroke-width="2.4"/></svg>
<div class="t" style="left:84.7px;top:1463.0px;font-size:16.5px;line-height:26px;letter-spacing:1.4px;">leftFemer : Rotation</div>
<svg style="left:763px;top:1468px" width="16" height="16"><path d="M8 1.5 L14.5 8 L8 14.5 L1.5 8 Z" fill="none" stroke="#444" stroke-width="1.3"/><circle cx="8" cy="8" r="1.8" fill="#444"/></svg>
<div style="left:0px;top:1488px;width:795px;height:24px;background:#cbcbcb"></div>
<svg style="left:68px;top:1493px" width="12" height="14"><path d="M0.5 0.5 L11 6.75 L0.5 13 Z" fill="#7a7a7a"/></svg>
<svg style="left:85px;top:1491px" width="18" height="18"><path d="M9 1.5 V10" stroke="#6bbf2a" stroke-width="2.4"/><path d="M9 10 L2 15.5" stroke="#3a8fe0" stroke-width="2.4"/><path d="M9 10 L16 15.5" stroke="#d82a2a" stroke-width="2.4"/></svg>
<div class="t" style="left:105.7px;top:1487.0px;font-size:16.5px;line-height:26px;letter-spacing:1.4px;">leftKnee : Rotation</div>
<svg style="left:763px;top:1492px" width="16" height="16"><path d="M8 1.5 L14.5 8 L8 14.5 L1.5 8 Z" fill="none" stroke="#444" stroke-width="1.3"/><circle cx="8" cy="8" r="1.8" fill="#444"/></svg>
<div style="left:0px;top:1512px;width:795px;height:24px;background:#c1c1c1"></div>
<svg style="left:47px;top:1517px" width="12" height="14"><path d="M0.5 0.5 L11 6.75 L0.5 13 Z" fill="#7a7a7a"/></svg>
<svg style="left:64px;top:1515px" width="18" height="18"><path d="M9 1.5 V10" stroke="#6bbf2a" stroke-width="2.4"/><path d="M9 10 L2 15.5" stroke="#3a8fe0" stroke-width="2.4"/><path d="M9 10 L16 15.5" stroke="#d82a2a" stroke-width="2.4"/></svg>
<div class="t" style="left:84.7px;top:1511.0px;font-size:16.5px;line-height:26px;letter-spacing:1.4px;">rightFemer : Rotation</div>
<svg style="left:763px;top:1516px" width="16" height="16"><path d="M8 1.5 L14.5 8 L8 14.5 L1.5 8 Z" fill="none" stroke="#444" stroke-width="1.3"/><circle cx="8" cy="8" r="1.8" fill="#444"/></svg>
<div style="left:0px;top:1536px;width:795px;height:24px;background:#cbcbcb"></div>
<svg style="left:68px;top:1541px" width="12" height="14"><path d="M0.5 0.5 L11 6.75 L0.5 13 Z" fill="#7a7a7a"/></svg>
<svg style="left:85px;top:1539px" width="18" height="18"><path d="M9 1.5 V10" stroke="#6bbf2a" stroke-width="2.4"/><path d="M9 10 L2 15.5" stroke="#3a8fe0" stroke-width="2.4"/><path d="M9 10 L16 15.5" stroke="#d82a2a" stroke-width="2.4"/></svg>
<div class="t" style="left:105.7px;top:1535.0px;font-size:16.5px;line-height:26px;letter-spacing:1.4px;">rightKnee : Rotation</div>
<svg style="left:763px;top:1540px" width="16" height="16"><path d="M8 1.5 L14.5 8 L8 14.5 L1.5 8 Z" fill="none" stroke="#444" stroke-width="1.3"/><circle cx="8" cy="8" r="1.8" fill="#444"/></svg>
<div style="left:0px;top:1560px;width:795px;height:24px;background:#c1c1c1"></div>
<svg style="left:47px;top:1565px" width="12" height="14"><path d="M0.5 0.5 L11 6.75 L0.5 13 Z" fill="#7a7a7a"/></svg>
<svg style="left:64px;top:1563px" width="18" height="18"><path d="M9 1.5 V10" stroke="#6bbf2a" stroke-width="2.4"/><path d="M9 10 L2 15.5" stroke="#3a8fe0" stroke-width="2.4"/><path d="M9 10 L16 15.5" stroke="#d82a2a" stroke-width="2.4"/></svg>
<div class="t" style="left:84.7px;top:1559.0px;font-size:16.5px;line-height:26px;letter-spacing:1.4px;">stomach : Rotation</div>
<svg style="left:763px;top:1564px" width="16" height="16"><path d="M8 1.5 L14.5 8 L8 14.5 L1.5 8 Z" fill="none" stroke="#444" stroke-width="1.3"/><circle cx="8" cy="8" r="1.8" fill="#444"/></svg>
<div style="left:0px;top:1584px;width:795px;height:24px;background:#cbcbcb"></div>
<svg style="left:68px;top:1589px" width="12" height="14"><path d="M0.5 0.5 L11 6.75 L0.5 13 Z" fill="#7a7a7a"/></svg>
<svg style="left:85px;top:1587px" width="18" height="18"><path d="M9 1.5 V10" stroke="#6bbf2a" stroke-width="2.4"/><path d="M9 10 L2 15.5" stroke="#3a8fe0" stroke-width="2.4"/><path d="M9 10 L16 15.5" stroke="#d82a2a" stroke-width="2.4"/></svg>
<div class="t" style="left:105.7px;top:1583.0px;font-size:16.5px;line-height:26px;letter-spacing:1.4px;">chest : Rotation</div>
<svg style="left:763px;top:1588px" width="16" height="16"><path d="M8 1.5 L14.5 8 L8 14.5 L1.5 8 Z" fill="none" stroke="#444" stroke-width="1.3"/><circle cx="8" cy="8" r="1.8" fill="#444"/></svg>
<div style="left:0px;top:1608px;width:795px;height:24px;background:#c1c1c1"></div>
<svg style="left:89px;top:1613px" width="12" height="14"><path d="M0.5 0.5 L11 6.75 L0.5 13 Z" fill="#7a7a7a"/></svg>
<svg style="left:106px;top:1611px" width="18" height="18"><path d="M9 1.5 V10" stroke="#6bbf2a" stroke-width="2.4"/><path d="M9 10 L2 15.5" stroke="#3a8fe0" stroke-width="2.4"/><path d="M9 10 L16 15.5" stroke="#d82a2a" stroke-width="2.4"/></svg>
<div class="t" style="left:126.7px;top:1607.0px;font-size:16.5px;line-height:26px;letter-spacing:1.4px;">head : Rotation</div>
<svg style="left:763px;top:1612px" width="16" height="16"><path d="M8 1.5 L14.5 8 L8 14.5 L1.5 8 Z" fill="none" stroke="#444" stroke-width="1.3"/><circle cx="8" cy="8" r="1.8" fill="#444"/></svg>
<div style="left:0px;top:1632px;width:795px;height:24px;background:#cbcbcb"></div>
<svg style="left:89px;top:1637px" width="12" height="14"><path d="M0.5 0.5 L11 6.75 L0.5 13 Z" fill="#7a7a7a"/></svg>
<svg style="left:106px;top:1635px" width="18" height="18"><path d="M9 1.5 V10" stroke="#6bbf2a" stroke-width="2.4"/><path d="M9 10 L2 15.5" stroke="#3a8fe0" stroke-width="2.4"/><path d="M9 10 L16 15.5" stroke="#d82a2a" stroke-width="2.4"/></svg>
<div class="t" style="left:126.7px;top:1631.0px;font-size:16.5px;line-height:26px;letter-spacing:1.4px;">leftShoulder : Position</div>
<svg style="left:763px;top:1636px" width="16" height="16"><path d="M8 1.5 L14.5 8 L8 14.5 L1.5 8 Z" fill="none" stroke="#444" stroke-width="1.3"/><circle cx="8" cy="8" r="1.8" fill="#444"/></svg>
<div style="left:0px;top:1656px;width:795px;height:24px;background:#c1c1c1"></div>
<svg style="left:110px;top:1661px" width="12" height="14"><path d="M0.5 0.5 L11 6.75 L0.5 13 Z" fill="#7a7a7a"/></svg>
<svg style="left:127px;top:1659px" width="18" height="18"><path d="M9 1.5 V10" stroke="#6bbf2a" stroke-width="2.4"/><path d="M9 10 L2 15.5" stroke="#3a8fe0" stroke-width="2.4"/><path d="M9 10 L16 15.5" stroke="#d82a2a" stroke-width="2.4"/></svg>
<div class="t" style="left:147.7px;top:1655.0px;font-size:16.5px;line-height:26px;letter-spacing:1.4px;">leftForearm : Rotation</div>
<svg style="left:763px;top:1660px" width="16" height="16"><path d="M8 1.5 L14.5 8 L8 14.5 L1.5 8 Z" fill="none" stroke="#444" stroke-width="1.3"/><circle cx="8" cy="8" r="1.8" fill="#444"/></svg>
<div style="left:0px;top:1680px;width:795px;height:24px;background:#cbcbcb"></div>
<svg style="left:89px;top:1685px" width="12" height="14"><path d="M0.5 0.5 L11 6.75 L0.5 13 Z" fill="#7a7a7a"/></svg>
<svg style="left:106px;top:1683px" width="18" height="18"><path d="M9 1.5 V10" stroke="#6bbf2a" stroke-width="2.4"/><path d="M9 10 L2 15.5" stroke="#3a8fe0" stroke-width="2.4"/><path d="M9 10 L16 15.5" stroke="#d82a2a" stroke-width="2.4"/></svg>
<div class="t" style="left:126.7px;top:1679.0px;font-size:16.5px;line-height:26px;letter-spacing:1.4px;">rightShoulder : Rotation</div>
<svg style="left:763px;top:1684px" width="16" height="16"><path d="M8 1.5 L14.5 8 L8 14.5 L1.5 8 Z" fill="none" stroke="#444" stroke-width="1.3"/><circle cx="8" cy="8" r="1.8" fill="#444"/></svg>
<div style="left:0px;top:1704px;width:795px;height:24px;background:#c1c1c1"></div>
<svg style="left:110px;top:1709px" width="12" height="14"><path d="M0.5 0.5 L11 6.75 L0.5 13 Z" fill="#7a7a7a"/></svg>
<svg style="left:127px;top:1707px" width="18" height="18"><path d="M9 1.5 V10" stroke="#6bbf2a" stroke-width="2.4"/><path d="M9 10 L2 15.5" stroke="#3a8fe0" stroke-width="2.4"/><path d="M9 10 L16 15.5" stroke="#d82a2a" stroke-width="2.4"/></svg>
<div class="t" style="left:147.7px;top:1703.0px;font-size:16.5px;line-height:26px;letter-spacing:1.4px;">rightForearm : Rotation</div>
<svg style="left:763px;top:1708px" width="16" height="16"><path d="M8 1.5 L14.5 8 L8 14.5 L1.5 8 Z" fill="none" stroke="#444" stroke-width="1.3"/><circle cx="8" cy="8" r="1.8" fill="#444"/></svg>
<div style="left:223.5px;top:1743.5px;width:344px;height:29px;background:linear-gradient(#fbfbfb,#d4d4d4);border:1px solid #5e5e5e;border-radius:4px"></div>
<div class="t" style="left:339px;top:1745.0px;font-size:16.5px;line-height:26px;letter-spacing:1.15px;">Add Property</div>
<div style="left:0px;top:2043px;width:795px;height:26px;background:linear-gradient(#e4e4e4,#cdcdcd);border-top:1px solid #a8a8a8"></div>
<div style="left:546.5px;top:2044px;width:120px;height:25px;background:#f4f4f4;border-left:1px solid #a0a0a0;border-right:1px solid #a0a0a0"></div>
<div class="t" style="left:566.5px;top:2043.5px;font-size:15px;line-height:24px;letter-spacing:0.5px;color:#111">Dopesheet</div>
<div class="t" style="left:700px;top:2043.5px;font-size:15px;line-height:24px;letter-spacing:0.5px;color:#111">Curves</div>
<div style="left:785.5px;top:2044px;width:1px;height:25px;background:#a0a0a0"></div>
<div style="left:795px;top:1363px;width:2389.5px;height:706px;background:#c4c4c4"></div>
<svg style="left:795px;top:1363.5px" width="2365" height="26"><defs><linearGradient id="rg" x1="0" y1="0" x2="0" y2="1"><stop offset="0" stop-color="#c9a6a8"/><stop offset="1" stop-color="#b89294"/></linearGradient></defs><rect x="0" y="0" width="2365" height="25" fill="url(#rg)"/><rect x="0" y="24" width="2365" height="1.5" fill="#3c3c3c"/><rect x="58.9" y="9" width="1.4" height="16" fill="#4a2c2c"/><rect x="96.3" y="16" width="1.4" height="9" fill="#5a3a3a"/><rect x="133.8" y="16" width="1.4" height="9" fill="#5a3a3a"/><rect x="171.2" y="16" width="1.4" height="9" fill="#5a3a3a"/><rect x="208.6" y="16" width="1.4" height="9" fill="#5a3a3a"/><rect x="246.1" y="9" width="1.4" height="16" fill="#4a2c2c"/><rect x="283.5" y="16" width="1.4" height="9" fill="#5a3a3a"/><rect x="320.9" y="16" width="1.4" height="9" fill="#5a3a3a"/><rect x="358.3" y="16" width="1.4" height="9" fill="#5a3a3a"/><rect x="395.8" y="16" width="1.4" height="9" fill="#5a3a3a"/><rect x="433.2" y="9" width="1.4" height="16" fill="#4a2c2c"/><rect x="470.6" y="16" width="1.4" height="9" fill="#5a3a3a"/><rect x="508.1" y="16" width="1.4" height="9" fill="#5a3a3a"/><rect x="545.5" y="16" width="1.4" height="9" fill="#5a3a3a"/><rect x="582.9" y="16" width="1.4" height="9" fill="#5a3a3a"/><rect x="620.4" y="9" width="1.4" height="16" fill="#4a2c2c"/><rect x="657.8" y="16" width="1.4" height="9" fill="#5a3a3a"/><rect x="695.2" y="16" width="1.4" height="9" fill="#5a3a3a"/><rect x="732.6" y="16" width="1.4" height="9" fill="#5a3a3a"/><rect x="770.1" y="16" width="1.4" height="9" fill="#5a3a3a"/><rect x="807.5" y="9" width="1.4" height="16" fill="#4a2c2c"/><rect x="844.9" y="16" width="1.4" height="9" fill="#5a3a3a"/><rect x="882.4" y="16" width="1.4" height="9" fill="#5a3a3a"/><rect x="919.8" y="16" width="1.4" height="9" fill="#5a3a3a"/><rect x="957.2" y="16" width="1.4" height="9" fill="#5a3a3a"/><rect x="994.6" y="9" width="1.4" height="16" fill="#4a2c2c"/><rect x="1032.1" y="16" width="1.4" height="9" fill="#5a3a3a"/><rect x="1069.5" y="16" width="1.4" height="9" fill="#5a3a3a"/><rect x="1106.9" y="16" width="1.4" height="9" fill="#5a3a3a"/><rect x="1144.4" y="16" width="1.4" height="9" fill="#5a3a3a"/><rect x="1181.8" y="9" width="1.4" height="16" fill="#4a2c2c"/><rect x="1219.2" y="16" width="1.4" height="9" fill="#5a3a3a"/><rect x="1256.7" y="16" width="1.4" height="9" fill="#5a3a3a"/><rect x="1294.1" y="16" width="1.4" height="9" fill="#5a3a3a"/><rect x="1331.5" y="16" width="1.4" height="9" fill="#5a3a3a"/><rect x="1369.0" y="9" width="1.4" height="16" fill="#4a2c2c"/><rect x="1406.4" y="16" width="1.4" height="9" fill="#5a3a3a"/><rect x="1443.8" y="16" width="1.4" height="9" fill="#5a3a3a"/><rect x="1481.2" y="16" width="1.4" height="9" fill="#5a3a3a"/><rect x="1518.7" y="16" width="1.4" height="9" fill="#5a3a3a"/><rect x="1556.1" y="9" width="1.4" height="16" fill="#4a2c2c"/><rect x="1593.5" y="16" width="1.4" height="9" fill="#5a3a3a"/><rect x="1631.0" y="16" width="1.4" height="9" fill="#5a3a3a"/><rect x="1668.4" y="16" width="1.4" height="9" fill="#5a3a3a"/><rect x="1705.8" y="16" width="1.4" height="9" fill="#5a3a3a"/><rect x="1743.2" y="9" width="1.4" height="16" fill="#4a2c2c"/><rect x="1780.7" y="16" width="1.4" height="9" fill="#5a3a3a"/><rect x="1818.1" y="16" width="1.4" height="9" fill="#5a3a3a"/><rect x="1855.5" y="16" width="1.4" height="9" fill="#5a3a3a"/><rect x="1893.0" y="16" width="1.4" height="9" fill="#5a3a3a"/><rect x="1930.4" y="9" width="1.4" height="16" fill="#4a2c2c"/><rect x="1967.8" y="16" width="1.4" height="9" fill="#5a3a3a"/><rect x="2005.3" y="16" width="1.4" height="9" fill="#5a3a3a"/><rect x="2042.7" y="16" width="1.4" height="9" fill="#5a3a3a"/><rect x="2080.1" y="16" width="1.4" height="9" fill="#5a3a3a"/><rect x="2117.6" y="9" width="1.4" height="16" fill="#4a2c2c"/><rect x="2155.0" y="16" width="1.4" height="9" fill="#5a3a3a"/><rect x="2192.4" y="16" width="1.4" height="9" fill="#5a3a3a"/><rect x="2229.8" y="16" width="1.4" height="9" fill="#5a3a3a"/><rect x="2267.3" y="16" width="1.4" height="9" fill="#5a3a3a"/><rect x="2304.7" y="9" width="1.4" height="16" fill="#4a2c2c"/><rect x="2342.1" y="16" width="1.4" height="9" fill="#5a3a3a"/></svg>
<div class="t" style="left:858.5px;top:1364px;font-size:15.5px;line-height:20px;color:#5a4646;letter-spacing:0.3px;-webkit-text-stroke:0">0:00</div><div class="t" style="left:1045.7px;top:1364px;font-size:15.5px;line-height:20px;color:#5a4646;letter-spacing:0.3px;-webkit-text-stroke:0">0:05</div><div class="t" style="left:1232.8px;top:1364px;font-size:15.5px;line-height:20px;color:#5a4646;letter-spacing:0.3px;-webkit-text-stroke:0">0:10</div><div class="t" style="left:1420.0px;top:1364px;font-size:15.5px;line-height:20px;color:#5a4646;letter-spacing:0.3px;-webkit-text-stroke:0">0:15</div><div class="t" style="left:1607.1px;top:1364px;font-size:15.5px;line-height:20px;color:#5a4646;letter-spacing:0.3px;-webkit-text-stroke:0">0:20</div><div class="t" style="left:1794.2px;top:1364px;font-size:15.5px;line-height:20px;color:#5a4646;letter-spacing:0.3px;-webkit-text-stroke:0">0:25</div><div class="t" style="left:1981.4px;top:1364px;font-size:15.5px;line-height:20px;color:#5a4646;letter-spacing:0.3px;-webkit-text-stroke:0">0:30</div><div class="t" style="left:2168.6px;top:1364px;font-size:15.5px;line-height:20px;color:#5a4646;letter-spacing:0.3px;-webkit-text-stroke:0">0:35</div><div class="t" style="left:2355.7px;top:1364px;font-size:15.5px;line-height:20px;color:#5a4646;letter-spacing:0.3px;-webkit-text-stroke:0">0:40</div><div class="t" style="left:2542.8px;top:1364px;font-size:15.5px;line-height:20px;color:#5a4646;letter-spacing:0.3px;-webkit-text-stroke:0">0:45</div><div class="t" style="left:2730.0px;top:1364px;font-size:15.5px;line-height:20px;color:#5a4646;letter-spacing:0.3px;-webkit-text-stroke:0">0:50</div><div class="t" style="left:2917.2px;top:1364px;font-size:15.5px;line-height:20px;color:#5a4646;letter-spacing:0.3px;-webkit-text-stroke:0">0:55</div><div class="t" style="left:3104.3px;top:1364px;font-size:15.5px;line-height:20px;color:#5a4646;letter-spacing:0.3px;-webkit-text-stroke:0">1:00</div>
<div style="left:3160px;top:1363px;width:24px;height:25px;background:linear-gradient(#e6e6e6,#d0d0d0);border-left:1px solid #aaa"></div>
<div style="left:795px;top:1388.5px;width:2365px;height:27.5px;background:linear-gradient(#646464,#7e7e7e)"></div>
<div style="left:795px;top:1416px;width:2365px;height:24.5px;background:linear-gradient(#646464,#7c7c7c);border-bottom:1px solid #505050"></div>
<svg style="left:795px;top:1440.5px" width="2365" height="608.5"><rect width="100%" height="100%" fill="#c4c4c4"/><rect x="0" y="0.0" width="2365" height="24" fill="#afafaf"/><rect x="0" y="19.5" width="2365" height="2" fill="#c5c5c5"/><rect x="0" y="21.5" width="2365" height="1.5" fill="#9e9e9e"/><rect x="0" y="24.0" width="2365" height="24" fill="#afafaf"/><rect x="0" y="43.5" width="2365" height="2" fill="#c5c5c5"/><rect x="0" y="45.5" width="2365" height="1.5" fill="#9e9e9e"/><rect x="0" y="48.0" width="2365" height="24" fill="#afafaf"/><rect x="0" y="67.5" width="2365" height="2" fill="#c5c5c5"/><rect x="0" y="69.5" width="2365" height="1.5" fill="#9e9e9e"/><rect x="0" y="72.0" width="2365" height="24" fill="#afafaf"/><rect x="0" y="91.5" width="2365" height="2" fill="#c5c5c5"/><rect x="0" y="93.5" width="2365" height="1.5" fill="#9e9e9e"/><rect x="0" y="96.0" width="2365" height="24" fill="#afafaf"/><rect x="0" y="115.5" width="2365" height="2" fill="#c5c5c5"/><rect x="0" y="117.5" width="2365" height="1.5" fill="#9e9e9e"/><rect x="0" y="120.0" width="2365" height="24" fill="#afafaf"/><rect x="0" y="139.5" width="2365" height="2" fill="#c5c5c5"/><rect x="0" y="141.5" width="2365" height="1.5" fill="#9e9e9e"/><rect x="0" y="144.0" width="2365" height="24" fill="#afafaf"/><rect x="0" y="163.5" width="2365" height="2" fill="#c5c5c5"/><rect x="0" y="165.5" width="2365" height="1.5" fill="#9e9e9e"/><rect x="0" y="168.0" width="2365" height="24" fill="#afafaf"/><rect x="0" y="187.5" width="2365" height="2" fill="#c5c5c5"/><rect x="0" y="189.5" width="2365" height="1.5" fill="#9e9e9e"/><rect x="0" y="192.0" width="2365" height="24" fill="#afafaf"/><rect x="0" y="211.5" width="2365" height="2" fill="#c5c5c5"/><rect x="0" y="213.5" width="2365" height="1.5" fill="#9e9e9e"/><rect x="0" y="216.0" width="2365" height="24" fill="#afafaf"/><rect x="0" y="235.5" width="2365" height="2" fill="#c5c5c5"/><rect x="0" y="237.5" width="2365" height="1.5" fill="#9e9e9e"/><rect x="0" y="240.0" width="2365" height="24" fill="#afafaf"/><rect x="0" y="259.5" width="2365" height="2" fill="#c5c5c5"/><rect x="0" y="261.5" width="2365" height="1.5" fill="#9e9e9e"/><rect x="0" y="264.0" width="2365" height="24" fill="#afafaf"/><rect x="0" y="283.5" width="2365" height="2" fill="#c5c5c5"/><rect x="0" y="285.5" width="2365" height="1.5" fill="#9e9e9e"/><rect x="96.4" y="0" width="1" height="628.5" fill="#a2a2a2"/><rect x="133.9" y="0" width="1" height="628.5" fill="#a2a2a2"/><rect x="171.3" y="0" width="1" height="628.5" fill="#a2a2a2"/><rect x="208.7" y="0" width="1" height="628.5" fill="#a2a2a2"/><rect x="246.2" y="0" width="1" height="628.5" fill="#8e8e8e"/><rect x="283.6" y="0" width="1" height="628.5" fill="#a2a2a2"/><rect x="321.0" y="0" width="1" height="628.5" fill="#a2a2a2"/><rect x="358.4" y="0" width="1" height="628.5" fill="#a2a2a2"/><rect x="395.9" y="0" width="1" height="628.5" fill="#a2a2a2"/><rect x="433.3" y="0" width="1" height="628.5" fill="#8e8e8e"/><rect x="470.7" y="0" width="1" height="628.5" fill="#a2a2a2"/><rect x="508.2" y="0" width="1" height="628.5" fill="#a2a2a2"/><rect x="545.6" y="0" width="1" height="628.5" fill="#a2a2a2"/><rect x="583.0" y="0" width="1" height="628.5" fill="#a2a2a2"/><rect x="620.5" y="0" width="1" height="628.5" fill="#8e8e8e"/><rect x="657.9" y="0" width="1" height="628.5" fill="#a2a2a2"/><rect x="695.3" y="0" width="1" height="628.5" fill="#a2a2a2"/><rect x="732.7" y="0" width="1" height="628.5" fill="#a2a2a2"/><rect x="770.2" y="0" width="1" height="628.5" fill="#a2a2a2"/><rect x="807.6" y="0" width="1" height="628.5" fill="#8e8e8e"/><rect x="845.0" y="0" width="1" height="628.5" fill="#a2a2a2"/><rect x="882.5" y="0" width="1" height="628.5" fill="#a2a2a2"/><rect x="919.9" y="0" width="1" height="628.5" fill="#a2a2a2"/><rect x="957.3" y="0" width="1" height="628.5" fill="#a2a2a2"/><rect x="994.8" y="0" width="1" height="628.5" fill="#8e8e8e"/><rect x="1032.2" y="0" width="1" height="628.5" fill="#a2a2a2"/><rect x="1069.6" y="0" width="1" height="628.5" fill="#a2a2a2"/><rect x="1107.0" y="0" width="1" height="628.5" fill="#a2a2a2"/><rect x="1144.5" y="0" width="1" height="628.5" fill="#a2a2a2"/><rect x="1181.9" y="0" width="1" height="628.5" fill="#8e8e8e"/><rect x="1219.3" y="0" width="1" height="628.5" fill="#a2a2a2"/><rect x="1256.8" y="0" width="1" height="628.5" fill="#a2a2a2"/><rect x="1294.2" y="0" width="1" height="628.5" fill="#a2a2a2"/><rect x="1331.6" y="0" width="1" height="628.5" fill="#a2a2a2"/><rect x="1369.1" y="0" width="1" height="628.5" fill="#8e8e8e"/><rect x="1406.5" y="0" width="1" height="628.5" fill="#a2a2a2"/><rect x="1443.9" y="0" width="1" height="628.5" fill="#a2a2a2"/><rect x="1481.3" y="0" width="1" height="628.5" fill="#a2a2a2"/><rect x="1518.8" y="0" width="1" height="628.5" fill="#a2a2a2"/><rect x="1556.2" y="0" width="1" height="628.5" fill="#8e8e8e"/><rect x="1593.6" y="0" width="1" height="628.5" fill="#a2a2a2"/><rect x="1631.1" y="0" width="1" height="628.5" fill="#a2a2a2"/><rect x="1668.5" y="0" width="1" height="628.5" fill="#a2a2a2"/><rect x="1705.9" y="0" width="1" height="628.5" fill="#a2a2a2"/><rect x="1743.3" y="0" width="1" height="628.5" fill="#8e8e8e"/><rect x="1780.8" y="0" width="1" height="628.5" fill="#a2a2a2"/><rect x="1818.2" y="0" width="1" height="628.5" fill="#a2a2a2"/><rect x="1855.6" y="0" width="1" height="628.5" fill="#a2a2a2"/><rect x="1893.1" y="0" width="1" height="628.5" fill="#a2a2a2"/><rect x="1930.5" y="0" width="1" height="628.5" fill="#8e8e8e"/><rect x="1967.9" y="0" width="1" height="628.5" fill="#a2a2a2"/><rect x="2005.4" y="0" width="1" height="628.5" fill="#a2a2a2"/><rect x="2042.8" y="0" width="1" height="628.5" fill="#a2a2a2"/><rect x="2080.2" y="0" width="1" height="628.5" fill="#a2a2a2"/><rect x="2117.7" y="0" width="1" height="628.5" fill="#8e8e8e"/><rect x="2155.1" y="0" width="1" height="628.5" fill="#a2a2a2"/><rect x="2192.5" y="0" width="1" height="628.5" fill="#a2a2a2"/><rect x="2229.9" y="0" width="1" height="628.5" fill="#a2a2a2"/><rect x="2267.4" y="0" width="1" height="628.5" fill="#a2a2a2"/><rect x="2304.8" y="0" width="1" height="628.5" fill="#8e8e8e"/><rect x="2342.2" y="0" width="1" height="628.5" fill="#a2a2a2"/></svg>
<svg style="left:846.5px;top:1410px" width="16" height="320"><path d="M8 9.2 L15.8 17.0 L8 24.8 L0.2 17.0 Z" fill="rgba(140,140,140,0.35)" stroke="#2e2e2e" stroke-width="1.6"/><path d="M8 31.9 L15.8 39.7 L8 47.5 L0.2 39.7 Z" fill="rgba(140,140,140,0.35)" stroke="#2e2e2e" stroke-width="1.6"/><path d="M8 55.9 L15.8 63.7 L8 71.5 L0.2 63.7 Z" fill="rgba(140,140,140,0.35)" stroke="#2e2e2e" stroke-width="1.6"/><path d="M8 79.9 L15.8 87.7 L8 95.5 L0.2 87.7 Z" fill="rgba(140,140,140,0.35)" stroke="#2e2e2e" stroke-width="1.6"/><path d="M8 103.9 L15.8 111.7 L8 119.5 L0.2 111.7 Z" fill="rgba(140,140,140,0.35)" stroke="#2e2e2e" stroke-width="1.6"/><path d="M8 127.9 L15.8 135.7 L8 143.5 L0.2 135.7 Z" fill="rgba(140,140,140,0.35)" stroke="#2e2e2e" stroke-width="1.6"/><path d="M8 151.9 L15.8 159.7 L8 167.5 L0.2 159.7 Z" fill="rgba(140,140,140,0.35)" stroke="#2e2e2e" stroke-width="1.6"/><path d="M8 175.9 L15.8 183.7 L8 191.5 L0.2 183.7 Z" fill="rgba(140,140,140,0.35)" stroke="#2e2e2e" stroke-width="1.6"/><path d="M8 199.9 L15.8 207.7 L8 215.5 L0.2 207.7 Z" fill="rgba(140,140,140,0.35)" stroke="#2e2e2e" stroke-width="1.6"/><path d="M8 223.9 L15.8 231.7 L8 239.5 L0.2 231.7 Z" fill="rgba(140,140,140,0.35)" stroke="#2e2e2e" stroke-width="1.6"/><path d="M8 247.9 L15.8 255.7 L8 263.5 L0.2 255.7 Z" fill="rgba(140,140,140,0.35)" stroke="#2e2e2e" stroke-width="1.6"/><path d="M8 271.9 L15.8 279.7 L8 287.5 L0.2 279.7 Z" fill="rgba(140,140,140,0.35)" stroke="#2e2e2e" stroke-width="1.6"/><path d="M8 295.9 L15.8 303.7 L8 311.5 L0.2 303.7 Z" fill="rgba(140,140,140,0.35)" stroke="#2e2e2e" stroke-width="1.6"/></svg>
<div style="left:854.0px;top:1363px;width:1.2px;height:686px;background:#f0f0f0"></div>
<div style="left:795px;top:1388px;width:2px;height:681px;background:#3a3a3a"></div>
<div style="left:3160px;top:1388px;width:24px;height:661px;background:#d6d6d6;border-left:1px solid #b0b0b0;border-right:1px solid #b8b8b8"></div>
<svg style="left:3166px;top:1423px" width="12" height="9"><path d="M0.5 8.5 L6 0.5 L11.5 8.5 Z" fill="#333"/></svg>
<div style="left:3162.5px;top:1443.5px;width:19px;height:577px;background:linear-gradient(90deg,#a3b4d0,#6f86aa);border:1px solid #4a6390;border-radius:9.5px"></div>
<svg style="left:3166px;top:2030px" width="12" height="9"><path d="M0.5 0.5 L6 8.5 L11.5 0.5 Z" fill="#333"/></svg>
<div style="left:797px;top:2049px;width:2387px;height:20px;background:#d6d6d6;border-top:1px solid #8a8a8a"></div>
<svg style="left:806px;top:2053px" width="9" height="12"><path d="M8.5 0.5 L0.5 6 L8.5 11.5 Z" fill="#333"/></svg>
<div style="left:822px;top:2050px;width:2312px;height:19px;background:linear-gradient(#a3b4d0,#6f86aa);border:1px solid #4a6390;border-radius:9.5px"></div>
<div style="left:838px;top:2051px;width:1px;height:17px;background:#4f6a92"></div>
<div style="left:3116px;top:2051px;width:1px;height:17px;background:#4f6a92"></div>
<svg style="left:3144px;top:2053px" width="9" height="12"><path d="M0.5 0.5 L8.5 6 L0.5 11.5 Z" fill="#333"/></svg>
<div style="left:0px;top:2069px;width:3840px;height:31px;background:linear-gradient(#a8a8a8,#a2a2a2);border-top:1px solid #888"></div>
<div style="left:3184.5px;top:1332.5px;width:6.5px;height:736.5px;background:linear-gradient(90deg,#8a8a8a,#b8b8b8 50%,#9a9a9a)"></div>
<div style="left:0px;top:2100px;width:3840px;height:60px;background:#293b28"></div>
<svg style="left:23px;top:2118px" width="26" height="24" fill="#fff"><path d="M0 3.3 L10.5 1.9 V11.3 H0 Z M11.7 1.7 L25 0 V11.3 H11.7 Z M0 12.6 H10.5 V22 L0 20.6 Z M11.7 12.6 H25 V24 L11.7 22.2 Z"/></svg>
<div style="left:73.5px;top:2101px;width:514.5px;height:59px;background:#f0f0f0"></div>
<svg style="left:89px;top:2117px" width="28" height="28"><circle cx="16.5" cy="10.5" r="8" fill="none" stroke="#222" stroke-width="1.7"/><path d="M10.8 16.2 L2 25" stroke="#222" stroke-width="1.9"/></svg>
<div class="t" style="left:132.5px;top:2116.5px;font-size:20.5px;line-height:32px;letter-spacing:0.85px;color:#222;-webkit-text-stroke:0">Type here to search</div>
<svg style="left:610px;top:2117px" width="28" height="28"><circle cx="14" cy="14" r="10.5" fill="none" stroke="#fff" stroke-width="2.6"/></svg>
<svg style="left:682px;top:2117px" width="28" height="28" fill="none" stroke="#fff" stroke-width="1.6"><rect x="2" y="6" width="16" height="14"/><path d="M2 2 H18 M2 24 H18 M24 2 V24"/></svg>
<svg style="left:755px;top:2115px" width="36" height="32"><path d="M1 3 H13 L16 6 H34 V29 H1 Z" fill="#e8b730"/><path d="M1 9 H34 V29 H1 Z" fill="#f8d46a"/><rect x="10" y="19" width="16" height="10" fill="#2a78c8"/><rect x="14" y="23" width="8" height="6" fill="#f8d46a"/></svg>
<div style="left:743px;top:2157px;width:61px;height:3px;background:#e3977b"></div>
<svg style="left:830px;top:2114px" width="36" height="36" viewBox="0 0 36 36">
<path d="M18 18 L3.28 9.5 A17 17 0 0 1 32.72 9.5 Z" fill="#db4437"/>
<path d="M18 18 L32.72 9.5 A17 17 0 0 1 18 35 Z" fill="#f4c20d"/>
<path d="M18 18 L18 35 A17 17 0 0 1 3.28 9.5 Z" fill="#0f9d58"/>
<circle cx="18" cy="18" r="8" fill="#fff"/><circle cx="18" cy="18" r="6.3" fill="#4285f4"/>
</svg>
<div style="left:817.5px;top:2157px;width:61px;height:3px;background:#e3977b"></div>
<div style="left:904.5px;top:2112px;width:36px;height:36px;background:#000"></div>
<svg style="left:911px;top:2117px" width="22" height="26"><path d="M3 1 H8 L14 17 V1 H19 V25 L14 24 L8 8 V24.5 L3 25 Z" fill="#e50914"/></svg>
<div style="left:962px;top:2100px;width:72.5px;height:60px;background:#4c5d4b"></div>
<svg style="left:981px;top:2114px" width="30.8" height="35.2" viewBox="0 0 28 32"><path d="M3 16.4 L10.5 9.8 L13.5 8.3 L21.4 5.2 L24.3 14.6 L23.4 16.4 L24.3 18.3 L21.4 27.1 L13.5 24.6 L10.5 23 Z M3.5 16.4 H16.4 L21.4 5.6 M16.4 16.4 L21.4 26.7" fill="none" stroke="#fff" stroke-width="2.6" stroke-linejoin="miter"/></svg>
<div style="left:962px;top:2157px;width:72.5px;height:3px;background:#e3977b"></div>
<svg style="left:3507px;top:2121px" width="22" height="16"><path d="M2 13 L10.5 4 L19 13" fill="none" stroke="#fff" stroke-width="1.5"/></svg>
<svg style="left:3540px;top:2119px" width="28" height="22" fill="none" stroke="#fff" stroke-width="1.4"><rect x="6" y="2" width="20" height="14"/><path d="M13 19 H20 M16.5 16 V19"/><rect x="1" y="1" width="6" height="6"/><path d="M4 7 V21"/></svg>
<svg style="left:3577px;top:2119px" width="26" height="22" fill="none" stroke="#fff" stroke-width="1.4"><path d="M1.5 7 H5.5 L11 2 V20 L5.5 15 H1.5 Z"/><path d="M14 8 C15.5 9.5 15.5 12.5 14 14 M17 5 C20 8 20 14 17 17 M20 2.5 C24.5 7 24.5 15 20 19.5"/></svg>
<svg style="left:3620px;top:2119px" width="24" height="22" fill="none" stroke="#fff" stroke-width="1.4"><path d="M7 18 L17 3 C18 1.5 20 2.5 19 4 L9 19 L6 20.5 Z"/><path d="M6 14 C1 14 1 21 5 21 M17 12 C21 12 22 15 18 16"/></svg>
<div class="t" style="left:3675px;top:2102.5px;font-size:18px;line-height:28px;letter-spacing:0.2px;color:#fff;-webkit-text-stroke:0">2:36 PM</div>
<div class="t" style="left:3671px;top:2130.5px;font-size:18px;line-height:28px;letter-spacing:0.5px;color:#fff;-webkit-text-stroke:0">3/1/2020</div>
<svg style="left:3776px;top:2116px" width="28" height="28"><path d="M1.5 2 H24.5 V21 H12 L7 25 V21 H1.5 Z" fill="#fff"/><path d="M5 7 H21 M5 11 H21 M5 15 H16" stroke="#293b28" stroke-width="1.3"/><circle cx="21" cy="20" r="5" fill="#293b28" stroke="#fff" stroke-width="1.2"/></svg>
<div style="left:3832px;top:2100px;width:1px;height:60px;background:#8a9a89"></div></body></html>
